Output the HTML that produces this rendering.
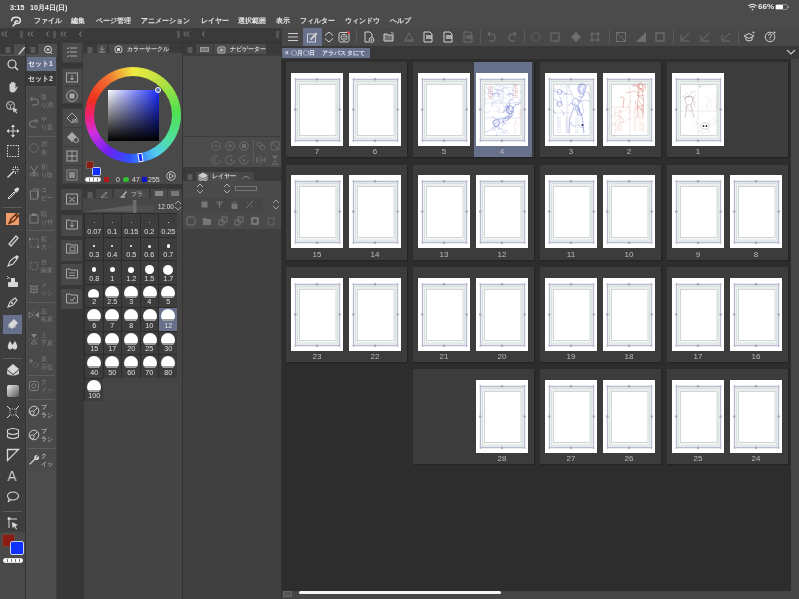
<!DOCTYPE html><html lang="ja"><head><meta charset="utf-8"><style>
*{margin:0;padding:0;box-sizing:border-box}
html,body{width:799px;height:599px;overflow:hidden;background:#4b4b4b;font-family:"Liberation Sans",sans-serif}
.t{position:absolute;white-space:nowrap;line-height:1;will-change:transform}
svg{position:absolute;overflow:visible}
</style></head><body>
<div class="t" style="left:9.5px;top:3.5px;font-size:7.5px;color:#f0f0f0;font-weight:bold;letter-spacing:-0.2px">3:15</div>
<div class="t" style="left:30px;top:3.5px;font-size:7.3px;color:#f0f0f0;font-weight:bold;letter-spacing:-0.1px">10月4日(日)</div>
<svg style="left:748px;top:3px" width="9" height="8" viewBox="0 0 9 8"><path d="M0.5 3 Q4.5 -0.5 8.5 3" stroke="#eee" stroke-width="1.2" fill="none"/><path d="M2 4.6 Q4.5 2.4 7 4.6" stroke="#eee" stroke-width="1.2" fill="none"/><path d="M3.4 6.2 Q4.5 5.3 5.6 6.2 L4.5 7.5Z" fill="#eee"/></svg>
<div class="t" style="left:758px;top:3px;font-size:8px;color:#eee;font-weight:bold">66%</div>
<div style="position:absolute;left:775px;top:4px;width:13px;height:6px;border:1px solid #888;border-radius:2px"></div>
<div style="position:absolute;left:776px;top:5px;width:7px;height:4px;background:#fff;"></div>
<div style="position:absolute;left:788px;top:6px;width:1px;height:2px;background:#888;"></div>
<svg style="left:10px;top:16px" width="12" height="11" viewBox="0 0 12 11"><path d="M1.6 4.8 Q1.8 1.2 6 1.2 Q10.4 1.2 10.4 4.4 Q10.4 7.4 6.6 7.6 Q4.6 7.6 4.9 6.2 Q5.3 4.8 7.6 5.2 M5.6 7.6 Q3.8 8.6 3.2 10" stroke="#e8e8e8" stroke-width="1.5" fill="none" stroke-linecap="round"/></svg>
<div class="t" style="left:34px;top:17px;font-size:7px;color:#e6e6e6;font-weight:bold">ファイル</div>
<div class="t" style="left:71px;top:17px;font-size:7px;color:#e6e6e6;font-weight:bold">編集</div>
<div class="t" style="left:95.5px;top:17px;font-size:7px;color:#e6e6e6;font-weight:bold">ページ管理</div>
<div class="t" style="left:141px;top:17px;font-size:7px;color:#e6e6e6;font-weight:bold">アニメーション</div>
<div class="t" style="left:200.5px;top:17px;font-size:7px;color:#e6e6e6;font-weight:bold">レイヤー</div>
<div class="t" style="left:238px;top:17px;font-size:7px;color:#e6e6e6;font-weight:bold">選択範囲</div>
<div class="t" style="left:276px;top:17px;font-size:7px;color:#e6e6e6;font-weight:bold">表示</div>
<div class="t" style="left:300px;top:17px;font-size:7px;color:#e6e6e6;font-weight:bold">フィルター</div>
<div class="t" style="left:345px;top:17px;font-size:7px;color:#e6e6e6;font-weight:bold">ウィンドウ</div>
<div class="t" style="left:390px;top:17px;font-size:7px;color:#e6e6e6;font-weight:bold">ヘルプ</div>
<div style="position:absolute;left:0px;top:28px;width:799px;height:13px;background:#3a3a3a;"></div>
<div style="position:absolute;left:0px;top:41px;width:25px;height:558px;background:#3e3e3e;"></div>
<div style="position:absolute;left:0px;top:532px;width:25px;height:67px;background:#494949;"></div>
<div style="position:absolute;left:25px;top:41px;width:1px;height:558px;background:#333;"></div>
<div style="position:absolute;left:26px;top:41px;width:31px;height:558px;background:#4d4d4d;"></div>
<div style="position:absolute;left:83px;top:41px;width:99px;height:558px;background:#454545;"></div>
<div style="position:absolute;left:182px;top:41px;width:1px;height:558px;background:#333;"></div>
<div style="position:absolute;left:183px;top:41px;width:98px;height:558px;background:#404040;"></div>
<div style="position:absolute;left:281px;top:41px;width:1px;height:558px;background:#333;"></div>
<div style="position:absolute;left:282px;top:28px;width:517px;height:18px;background:#484848;"></div>
<div style="position:absolute;left:282px;top:46px;width:517px;height:13px;background:#383838;"></div>
<div style="position:absolute;left:282px;top:59px;width:517px;height:540px;background:#2d2d2d;"></div>
<div style="position:absolute;left:791px;top:59px;width:8px;height:540px;background:#454545;"></div>
<div style="position:absolute;left:282px;top:591px;width:517px;height:8px;background:#454545;"></div>
<div style="position:absolute;left:298.5px;top:591.2px;width:202px;height:3px;border-radius:1.5px;background:#f4f4f4"></div>
<div style="position:absolute;left:283px;top:591px;width:9px;height:6px;background:#555;border:1px solid #666"></div>
<svg style="left:1px;top:31px" width="7" height="6" viewBox="0 0 7 6"><path d="M3 0.5 L0.8 3 L3 5.5 M6 0.5 L3.8 3 L6 5.5" stroke="#8c8c8c" stroke-width="0.9" fill="none"/></svg>
<svg style="left:26.5px;top:31px" width="7" height="6" viewBox="0 0 7 6"><path d="M3 0.5 L0.8 3 L3 5.5 M6 0.5 L3.8 3 L6 5.5" stroke="#8c8c8c" stroke-width="0.9" fill="none"/></svg>
<svg style="left:59.5px;top:31px" width="7" height="6" viewBox="0 0 7 6"><path d="M3 0.5 L0.8 3 L3 5.5 M6 0.5 L3.8 3 L6 5.5" stroke="#8c8c8c" stroke-width="0.9" fill="none"/></svg>
<svg style="left:183px;top:31px" width="7" height="6" viewBox="0 0 7 6"><path d="M3 0.5 L0.8 3 L3 5.5 M6 0.5 L3.8 3 L6 5.5" stroke="#8c8c8c" stroke-width="0.9" fill="none"/></svg>
<svg style="left:46px;top:31px" width="4" height="6" viewBox="0 0 4 6"><path d="M2.5 0.5 L0.5 3 L2.5 5.5" stroke="#8c8c8c" stroke-width="0.9" fill="none"/></svg>
<svg style="left:79px;top:31px" width="4" height="6" viewBox="0 0 4 6"><path d="M2.5 0.5 L0.5 3 L2.5 5.5" stroke="#8c8c8c" stroke-width="0.9" fill="none"/></svg>
<svg style="left:202px;top:31px" width="4" height="6" viewBox="0 0 4 6"><path d="M2.5 0.5 L0.5 3 L2.5 5.5" stroke="#8c8c8c" stroke-width="0.9" fill="none"/></svg>
<div style="position:absolute;left:20px;top:30.5px;width:3px;height:7.5px;background:#555;"></div>
<div style="position:absolute;left:53px;top:30.5px;width:3px;height:7.5px;background:#555;"></div>
<div style="position:absolute;left:177px;top:30.5px;width:3px;height:7.5px;background:#555;"></div>
<div style="position:absolute;left:276px;top:30.5px;width:3px;height:7.5px;background:#555;"></div>
<div style="position:absolute;left:0px;top:41px;width:25px;height:13px;background:#3a3a3a;"></div>
<div style="position:absolute;left:14px;top:44px;width:11px;height:10px;background:#4e4e4e;"></div>
<svg style="left:5.0px;top:46.5px" width="6" height="6" viewBox="0 0 6 6"><path d="M0.5 1H5.5M0.5 3H5.5M0.5 5H5.5" stroke="#7a7a7a" stroke-width="1"/></svg>
<div style="position:absolute;left:0px;top:54px;width:25px;height:2px;background:#505050;"></div>
<svg style="left:15.5px;top:45px" width="10" height="10" viewBox="0 0 10 10"><path d="M2 9.5 L7.5 2.5 Q8.5 1.5 9.5 2.5 L3.5 9.5 Z" fill="#d8d8d8"/></svg>
<svg style="left:6px;top:58px" width="14" height="14" viewBox="0 0 14 14"><circle cx="6" cy="6" r="4" stroke="#d8d8d8" stroke-width="1.2" fill="none"/><path d="M9 9 L12 12" stroke="#d8d8d8" stroke-width="1.5"/></svg>
<svg style="left:5.5px;top:80px" width="14" height="14" viewBox="0 0 14 14"><path d="M3.5 8 V4.5 Q3.5 3.5 4.3 3.5 Q5 3.5 5 4.5 V7 V2.8 Q5 2 5.8 2 Q6.5 2 6.5 2.8 V7 V2.5 Q6.5 1.7 7.3 1.7 Q8 1.7 8 2.5 V7 V3.5 Q8 2.7 8.8 2.7 Q9.5 2.7 9.5 3.5 V8.5 L10.5 7 Q11.3 6.2 12 6.8 L10 10.5 Q9 12.5 6.5 12.5 Q3.5 12.5 3.5 9.5Z" fill="#d0d0d0"/></svg>
<svg style="left:5px;top:100px" width="14" height="14" viewBox="0 0 14 14"><circle cx="5.5" cy="5.5" r="4" stroke="#c8c8c8" stroke-width="1" fill="none"/><path d="M3 3.5 L5.5 5.5 L8 3.5 M5.5 5.5 V9" stroke="#c8c8c8" stroke-width="0.8" fill="none"/><path d="M8 7.5 L13 10 L10.8 10.6 L12.2 13 L11.2 13.6 L9.8 11.2 L8.3 12.6Z" fill="#d0d0d0"/></svg>
<svg style="left:5.5px;top:124px" width="14" height="14" viewBox="0 0 14 14"><path d="M7 1 V13 M1 7 H13" stroke="#d8d8d8" stroke-width="0.9"/><path d="M7 0.5 L5 3 H9Z M7 13.5 L5 11 H9Z M0.5 7 L3 5 V9Z M13.5 7 L11 5 V9Z" fill="#d8d8d8"/></svg>
<svg style="left:6px;top:144px" width="14" height="14" viewBox="0 0 14 14"><rect x="1.5" y="1.5" width="11" height="11" stroke="#d8d8d8" stroke-width="1.1" stroke-dasharray="1.5 1.2" fill="none"/></svg>
<svg style="left:6px;top:165px" width="14" height="14" viewBox="0 0 14 14"><path d="M1.5 12.5 L8 6" stroke="#d8d8d8" stroke-width="1.4"/><path d="M9.5 1 V3.5 M9.5 6.5 V9 M6 4.5 H8.5 M10.5 4.5 H13 M7 2 L8 3 M12 2 L11 3 M7 7 L8 6 M12 7 L11 6" stroke="#d8d8d8" stroke-width="0.9"/></svg>
<svg style="left:6px;top:186px" width="14" height="14" viewBox="0 0 14 14"><path d="M2 12 L8 6 L9 7 L3 13Z" stroke="#d8d8d8" stroke-width="1" fill="none"/><path d="M8 4 L10 2 Q12 1 13 2.5 Q13.5 4 12 5 L10 7Z" fill="#d8d8d8"/></svg>
<div style="position:absolute;left:3px;top:207px;width:19px;height:1px;background:#5a5a5a;"></div>
<div style="position:absolute;left:6.3px;top:212.7px;width:12.7px;height:12.5px;background:#ee9c6c;"></div>
<svg style="left:6px;top:212px" width="14" height="14" viewBox="0 0 14 14"><path d="M3 11.5 L5 7 L9.5 3 L11.5 5 L7.5 9.5Z" stroke="#5a2a10" stroke-width="1.3" fill="none"/><path d="M3 11.5 L6.5 8" stroke="#5a2a10" stroke-width="1"/><path d="M9 2.5 L10.5 1.5 L12.5 3.5 L11.5 5" stroke="#5a2a10" stroke-width="1.3" fill="none"/></svg>
<svg style="left:6px;top:233px" width="14" height="14" viewBox="0 0 14 14"><path d="M3 11 L10 3 L12 5 L5 13Z" stroke="#d8d8d8" stroke-width="1.2" fill="none"/></svg>
<svg style="left:6px;top:254px" width="14" height="14" viewBox="0 0 14 14"><path d="M2 12 L4 7 L9 3 L11 5 L7 10Z" stroke="#d8d8d8" stroke-width="1.1" fill="none"/><path d="M9 3 L11 1 L13 3 L11 5" fill="#d8d8d8"/></svg>
<svg style="left:6px;top:274px" width="14" height="14" viewBox="0 0 14 14"><rect x="2" y="8" width="10" height="5" rx="1" fill="#d8d8d8"/><rect x="5" y="4" width="4" height="5" fill="#d8d8d8"/><path d="M1 2 L4 5 M1 5 L3 3" stroke="#d8d8d8" stroke-width="0.8"/></svg>
<svg style="left:6px;top:295px" width="14" height="14" viewBox="0 0 14 14"><path d="M2 12 L4 7 L9 3 L11 5 L7 10Z" stroke="#d8d8d8" stroke-width="1.1" fill="none"/><circle cx="6" cy="8" r="1" fill="#d8d8d8"/></svg>
<div style="position:absolute;left:3px;top:314.5px;width:19px;height:19.5px;background:#68718c;"></div>
<svg style="left:6px;top:317px" width="14" height="14" viewBox="0 0 14 14"><path d="M2 8 L8 2 L12 6 L6 12Z" fill="#d8d8d8"/><path d="M2 10 H10" stroke="#d8d8d8" stroke-width="0.8"/></svg>
<svg style="left:6px;top:338px" width="14" height="14" viewBox="0 0 14 14"><path d="M4 3 Q1 8 2 10 Q4 13 6.5 10 Q9 13 11 10 Q12 8 9 3 L6.5 7Z" fill="#d8d8d8"/></svg>
<div style="position:absolute;left:3px;top:358px;width:19px;height:1px;background:#5a5a5a;"></div>
<svg style="left:6px;top:363px" width="14" height="14" viewBox="0 0 14 14"><path d="M1 6 L7 1 L13 6 L7 11Z" fill="#d8d8d8"/><path d="M1 7 L7 12 L13 7 V11 Q7 14 1 11Z" fill="#d8d8d8" opacity="0.9"/></svg>
<div style="position:absolute;left:7px;top:385px;width:12px;height:12px;border-radius:2px;background:linear-gradient(135deg,#eee,#555)"></div>
<svg style="left:6px;top:405px" width="14" height="14" viewBox="0 0 14 14"><path d="M1 1 L4 4 M13 1 L10 4 M1 13 L4 10 M13 13 L10 10" stroke="#d8d8d8" stroke-width="1"/><rect x="4" y="4" width="6" height="6" stroke="#d8d8d8" stroke-width="0.8" stroke-dasharray="1 1" fill="none"/></svg>
<svg style="left:6px;top:427px" width="14" height="14" viewBox="0 0 14 14"><path d="M1.5 3 Q7 0 12.5 3 V6 Q7 9 1.5 6Z M1.5 7 V10 Q7 13 12.5 10 V7" stroke="#d8d8d8" stroke-width="1.1" fill="none"/></svg>
<svg style="left:6px;top:448px" width="14" height="14" viewBox="0 0 14 14"><path d="M1.5 1.5 H12.5 L1.5 12.5Z" stroke="#d8d8d8" stroke-width="1.3" fill="none"/></svg>
<div class="t" style="left:7px;top:468px;font-size:15px;color:#d0d0d0;font-weight:normal;transform:scaleX(0.9)">A</div>
<svg style="left:6px;top:490px" width="14" height="14" viewBox="0 0 14 14"><ellipse cx="7" cy="6" rx="5.5" ry="4" stroke="#d8d8d8" stroke-width="1.1" fill="none"/><path d="M3 9 L2 12 L5 9.8" stroke="#d8d8d8" stroke-width="1" fill="none"/></svg>
<div style="position:absolute;left:3px;top:511px;width:19px;height:1px;background:#5a5a5a;"></div>
<svg style="left:6px;top:516px" width="14" height="14" viewBox="0 0 14 14"><circle cx="3" cy="2.5" r="1.5" fill="#d8d8d8"/><path d="M3 3 V12 M3 3 H11" stroke="#d8d8d8" stroke-width="1"/><path d="M6 6 L12 9 L9.5 10 L11 13 L10 13.5 L8.5 10.5 L6.5 12Z" fill="#d8d8d8"/></svg>
<div style="position:absolute;left:2px;top:534px;width:13px;height:13px;background:#8c1c10;border:1px solid #6a4a40"></div>
<div style="position:absolute;left:10px;top:541px;width:14px;height:14px;background:#1030ff;border:1.5px solid #c8d0f0;border-radius:2px"></div>
<div style="position:absolute;left:3px;top:558px;width:20px;height:5px;border:1px solid #ddd;border-radius:2px;background:repeating-linear-gradient(90deg,#fff 0 3px,#777 3px 4px)"></div>
<div style="position:absolute;left:26px;top:41px;width:31px;height:13px;background:#3a3a3a;"></div>
<div style="position:absolute;left:38px;top:44px;width:19px;height:10px;background:#4e4e4e;"></div>
<svg style="left:30.0px;top:46.5px" width="6" height="6" viewBox="0 0 6 6"><path d="M0.5 1H5.5M0.5 3H5.5M0.5 5H5.5" stroke="#7a7a7a" stroke-width="1"/></svg>
<svg style="left:43px;top:45px" width="10" height="10" viewBox="0 0 10 10"><circle cx="5" cy="4.5" r="3.5" stroke="#d8d8d8" stroke-width="1" fill="none"/><circle cx="5" cy="4.5" r="1.3" fill="#d8d8d8"/><path d="M7 7 L9 9" stroke="#d8d8d8" stroke-width="1"/></svg>
<div style="position:absolute;left:26px;top:54px;width:31px;height:2px;background:#505050;"></div>
<div style="position:absolute;left:27px;top:57px;width:29px;height:14px;background:#68718c;"></div>
<div class="t" style="left:28px;top:60px;font-size:7px;color:#e6e6f0;font-weight:bold">セット1</div>
<div style="position:absolute;left:26px;top:71px;width:31px;height:15px;background:#3a3a3a;"></div>
<div class="t" style="left:28px;top:75px;font-size:7px;color:#e0e0e0;font-weight:bold">セット2</div>
<div style="position:absolute;left:27px;top:88px;width:28.5px;height:383px;background:#4a4a4a;"></div>
<div style="position:absolute;left:55.5px;top:56px;width:1.5px;height:543px;background:#414141;"></div>
<div class="t" style="left:41px;top:94px;font-size:6px;color:#858585;">取</div>
<div class="t" style="left:41px;top:102px;font-size:6px;color:#858585;">り消</div>
<svg style="left:28px;top:95px" width="12" height="12" viewBox="0 0 12 12"><path d="M3 4 H7.5 Q10.5 4 10.5 7 Q10.5 10 7.5 10 H4" stroke="#858585" stroke-width="1" fill="none"/><path d="M4.5 2 L2.5 4 L4.5 6" stroke="#858585" stroke-width="1" fill="none"/></svg>
<div class="t" style="left:41px;top:115.5px;font-size:6px;color:#858585;">や</div>
<div class="t" style="left:41px;top:123.5px;font-size:6px;color:#858585;">り直</div>
<svg style="left:28px;top:116.5px" width="12" height="12" viewBox="0 0 12 12"><path d="M9 4 H4.5 Q1.5 4 1.5 7 Q1.5 10 4.5 10 H8" stroke="#858585" stroke-width="1" fill="none"/><path d="M7.5 2 L9.5 4 L7.5 6" stroke="#858585" stroke-width="1" fill="none"/></svg>
<div class="t" style="left:41px;top:141px;font-size:6px;color:#858585;">消</div>
<div class="t" style="left:41px;top:149px;font-size:6px;color:#858585;">去</div>
<svg style="left:28px;top:142px" width="12" height="12" viewBox="0 0 12 12"><circle cx="6" cy="6" r="4.3" stroke="#858585" stroke-width="1" fill="none" stroke-dasharray="1.2 1"/></svg>
<div class="t" style="left:41px;top:164px;font-size:6px;color:#858585;">切</div>
<div class="t" style="left:41px;top:172px;font-size:6px;color:#858585;">り取</div>
<svg style="left:28px;top:165px" width="12" height="12" viewBox="0 0 12 12"><path d="M2.5 1 L7 8 M9.5 1 L5 8" stroke="#858585" stroke-width="0.9"/><circle cx="4" cy="9.5" r="1.7" stroke="#858585" stroke-width="0.8" fill="none"/><circle cx="8" cy="9.5" r="1.7" stroke="#858585" stroke-width="0.8" fill="none"/></svg>
<div class="t" style="left:41px;top:187px;font-size:6px;color:#858585;">コ</div>
<div class="t" style="left:41px;top:195px;font-size:6px;color:#858585;">ピー</div>
<svg style="left:28px;top:188px" width="12" height="12" viewBox="0 0 12 12"><rect x="2.5" y="3" width="7" height="8" stroke="#858585" stroke-width="0.9" fill="none"/><path d="M4.5 1 H10.5 V9" stroke="#858585" stroke-width="0.8" fill="none"/></svg>
<div class="t" style="left:41px;top:210.5px;font-size:6px;color:#858585;">貼</div>
<div class="t" style="left:41px;top:218.5px;font-size:6px;color:#858585;">り付</div>
<svg style="left:28px;top:211.5px" width="12" height="12" viewBox="0 0 12 12"><rect x="2" y="3" width="8" height="8" stroke="#858585" stroke-width="0.9" fill="none"/><rect x="4" y="1.5" width="4" height="2.5" fill="#858585"/></svg>
<div class="t" style="left:41px;top:235.5px;font-size:6px;color:#858585;">拡</div>
<div class="t" style="left:41px;top:243.5px;font-size:6px;color:#858585;">大・</div>
<svg style="left:28px;top:236.5px" width="12" height="12" viewBox="0 0 12 12"><rect x="2" y="2" width="8" height="8" stroke="#858585" stroke-width="0.8" fill="none" stroke-dasharray="1 1"/><rect x="1" y="1" width="2" height="2" fill="#858585"/><rect x="9" y="9" width="2" height="2" fill="#858585"/></svg>
<div class="t" style="left:41px;top:259px;font-size:6px;color:#858585;">自</div>
<div class="t" style="left:41px;top:267px;font-size:6px;color:#858585;">由変</div>
<svg style="left:28px;top:260px" width="12" height="12" viewBox="0 0 12 12"><path d="M3 2 L10 3 L9 10 L2 9Z" stroke="#858585" stroke-width="0.8" fill="none" stroke-dasharray="1 1"/></svg>
<div class="t" style="left:41px;top:282px;font-size:6px;color:#858585;">メ</div>
<div class="t" style="left:41px;top:290px;font-size:6px;color:#858585;">ッシ</div>
<svg style="left:28px;top:283px" width="12" height="12" viewBox="0 0 12 12"><path d="M2 3 Q6 4.5 10 3 M2 6 Q6 7.5 10 6 M2 9 Q6 10.5 10 9 M3 2 V10 M6 2.5 V10.5 M9 2 V10" stroke="#858585" stroke-width="0.7" fill="none"/></svg>
<div class="t" style="left:41px;top:308px;font-size:6px;color:#858585;">左</div>
<div class="t" style="left:41px;top:316px;font-size:6px;color:#858585;">右反</div>
<svg style="left:28px;top:309px" width="12" height="12" viewBox="0 0 12 12"><path d="M6 1 V11" stroke="#858585" stroke-width="0.7" stroke-dasharray="1 1"/><path d="M1 3 L5 6 L1 9Z" stroke="#858585" stroke-width="0.8" fill="none"/><path d="M11 3 L7 6 L11 9Z" fill="#858585"/></svg>
<div class="t" style="left:41px;top:331.5px;font-size:6px;color:#858585;">上</div>
<div class="t" style="left:41px;top:339.5px;font-size:6px;color:#858585;">下反</div>
<svg style="left:28px;top:332.5px" width="12" height="12" viewBox="0 0 12 12"><path d="M1 6 H11" stroke="#858585" stroke-width="0.7" stroke-dasharray="1 1"/><path d="M3 1 L6 5 L9 1Z" fill="#858585"/><path d="M3 11 L6 7 L9 11Z" stroke="#858585" stroke-width="0.8" fill="none"/></svg>
<div class="t" style="left:41px;top:355.5px;font-size:6px;color:#858585;">表</div>
<div class="t" style="left:41px;top:363.5px;font-size:6px;color:#858585;">示位</div>
<svg style="left:28px;top:356.5px" width="12" height="12" viewBox="0 0 12 12"><path d="M1 4 H5 M3 2 V6" stroke="#858585" stroke-width="0.8"/><circle cx="7.5" cy="8" r="2.5" stroke="#858585" stroke-width="0.8" fill="none" stroke-dasharray="1 0.8"/></svg>
<div class="t" style="left:41px;top:379px;font-size:6px;color:#858585;">ク</div>
<div class="t" style="left:41px;top:387px;font-size:6px;color:#858585;">イッ</div>
<svg style="left:28px;top:380px" width="12" height="12" viewBox="0 0 12 12"><rect x="1.5" y="1.5" width="9" height="9" rx="2" stroke="#858585" stroke-width="0.9" fill="none"/><circle cx="6" cy="6" r="2.3" stroke="#858585" stroke-width="0.9" fill="none"/></svg>
<div class="t" style="left:41px;top:403.5px;font-size:6px;color:#d6d6d6;">ブ</div>
<div class="t" style="left:41px;top:411.5px;font-size:6px;color:#d6d6d6;">ラシ</div>
<svg style="left:28px;top:404.5px" width="12" height="12" viewBox="0 0 12 12"><circle cx="6" cy="6" r="4.8" stroke="#d6d6d6" stroke-width="0.9" fill="none"/><circle cx="4.2" cy="7.8" r="2" stroke="#d6d6d6" stroke-width="0.8" fill="none"/><path d="M5.5 6.5 L9 3" stroke="#d6d6d6" stroke-width="0.9"/></svg>
<div class="t" style="left:41px;top:428px;font-size:6px;color:#d6d6d6;">ブ</div>
<div class="t" style="left:41px;top:436px;font-size:6px;color:#d6d6d6;">ラシ</div>
<svg style="left:28px;top:429px" width="12" height="12" viewBox="0 0 12 12"><circle cx="6" cy="6" r="4.8" stroke="#d6d6d6" stroke-width="0.9" fill="none"/><circle cx="4.2" cy="7.8" r="2" stroke="#d6d6d6" stroke-width="0.8" fill="none"/><path d="M5.5 6.5 L9 3" stroke="#d6d6d6" stroke-width="0.9"/></svg>
<div class="t" style="left:41px;top:453px;font-size:6px;color:#d6d6d6;">ク</div>
<div class="t" style="left:41px;top:461px;font-size:6px;color:#d6d6d6;">イッ</div>
<svg style="left:28px;top:454px" width="12" height="12" viewBox="0 0 12 12"><path d="M2 10 L7 5 M7 5 Q6 2 8.5 1.5 L7.5 3.5 L9 4.5 L10.5 3 Q11 6 7.5 5.5" stroke="#d6d6d6" stroke-width="1.1" fill="none" stroke-linecap="round"/></svg>
<div style="position:absolute;left:28px;top:135.5px;width:27px;height:1px;background:#5c5c5c;"></div>
<div style="position:absolute;left:28px;top:230px;width:27px;height:1px;background:#5c5c5c;"></div>
<div style="position:absolute;left:28px;top:302px;width:27px;height:1px;background:#5c5c5c;"></div>
<div style="position:absolute;left:28px;top:375px;width:27px;height:1px;background:#5c5c5c;"></div>
<div style="position:absolute;left:28px;top:398.5px;width:27px;height:1px;background:#5c5c5c;"></div>
<div style="position:absolute;left:28px;top:447.5px;width:27px;height:1px;background:#5c5c5c;"></div>
<div style="position:absolute;left:57px;top:41px;width:26px;height:558px;background:#373737;"></div>
<div style="position:absolute;left:61px;top:42px;width:22px;height:21px;background:#3d3d3d;"></div>
<div style="position:absolute;left:63px;top:43px;width:19px;height:19px;background:#4a4a4a;"></div>
<div style="position:absolute;left:61px;top:68px;width:22px;height:36px;background:#3d3d3d;"></div>
<div style="position:absolute;left:63px;top:69px;width:19px;height:17px;background:#4a4a4a;"></div>
<div style="position:absolute;left:63px;top:87px;width:19px;height:16px;background:#4a4a4a;"></div>
<div style="position:absolute;left:61px;top:108px;width:22px;height:76px;background:#3d3d3d;"></div>
<div style="position:absolute;left:63px;top:109px;width:19px;height:18px;background:#4a4a4a;"></div>
<div style="position:absolute;left:63px;top:128px;width:19px;height:18px;background:#4a4a4a;"></div>
<div style="position:absolute;left:63px;top:147px;width:19px;height:18px;background:#4a4a4a;"></div>
<div style="position:absolute;left:63px;top:166px;width:19px;height:17px;background:#4a4a4a;"></div>
<div style="position:absolute;left:60.5px;top:189.3px;width:21.7px;height:21px;background:#484848;"></div>
<div style="position:absolute;left:60.5px;top:214.6px;width:21.7px;height:21.4px;background:#484848;"></div>
<div style="position:absolute;left:60.5px;top:239.6px;width:21.7px;height:21px;background:#484848;"></div>
<div style="position:absolute;left:60.5px;top:264px;width:21.7px;height:21px;background:#484848;"></div>
<div style="position:absolute;left:60.5px;top:288.6px;width:21.7px;height:20px;background:#484848;"></div>
<svg style="left:65px;top:45px" width="14" height="14" viewBox="0 0 14 14"><path d="M5 3 H12 M5 7 H12 M5 11 H12" stroke="#a8a8a8" stroke-width="1.2"/><path d="M2 3 L3 4 L4 2 M2 7 L3 8 L4 6 M2 11 L3 12 L4 10" stroke="#a8a8a8" stroke-width="0.8" fill="none"/></svg>
<svg style="left:65px;top:70px" width="14" height="14" viewBox="0 0 14 14"><rect x="1.5" y="3" width="11" height="9" stroke="#a8a8a8" stroke-width="1" fill="none"/><path d="M7 5 V10 M5 8 L7 10 L9 8" stroke="#a8a8a8" stroke-width="1" fill="none"/></svg>
<svg style="left:65px;top:89px" width="14" height="14" viewBox="0 0 14 14"><circle cx="7" cy="7" r="5.5" stroke="#a8a8a8" stroke-width="1" fill="none"/><rect x="4.5" y="4.5" width="5" height="5" fill="#a8a8a8"/></svg>
<svg style="left:65px;top:111px" width="14" height="14" viewBox="0 0 14 14"><path d="M2 7 L7 2 L12 7 L7 12Z" stroke="#a8a8a8" stroke-width="1" fill="none"/><path d="M7 9 H13 M7 11 H13" stroke="#a8a8a8" stroke-width="1"/></svg>
<svg style="left:65px;top:130px" width="14" height="14" viewBox="0 0 14 14"><path d="M2 7 L7 2 L12 7 L7 12Z" fill="#a8a8a8"/><circle cx="11" cy="10" r="2.5" stroke="#a8a8a8" stroke-width="1" fill="#4a4a4a"/></svg>
<svg style="left:65px;top:149px" width="14" height="14" viewBox="0 0 14 14"><rect x="2" y="2" width="10" height="10" stroke="#a8a8a8" stroke-width="1" fill="none"/><path d="M2 7 H12 M7 2 V12" stroke="#a8a8a8" stroke-width="1"/></svg>
<svg style="left:65px;top:168px" width="14" height="14" viewBox="0 0 14 14"><rect x="2" y="2" width="10" height="10" stroke="#8a8a8a" stroke-width="1" fill="none"/><rect x="4" y="4" width="6" height="6" fill="#8a8a8a"/></svg>
<svg style="left:65px;top:192px" width="14" height="14" viewBox="0 0 14 14"><rect x="1.5" y="2" width="11" height="10" stroke="#a8a8a8" stroke-width="1" fill="none"/><path d="M4 5 L10 10 M10 5 L4 10" stroke="#a8a8a8" stroke-width="1"/></svg>
<svg style="left:65px;top:217px" width="14" height="14" viewBox="0 0 14 14"><path d="M1.5 3 H5 L6 4 H12.5 V12 H1.5Z" stroke="#a8a8a8" stroke-width="1" fill="none"/><path d="M7 5.5 V10 M5 8 L7 10 L9 8" stroke="#a8a8a8" stroke-width="1" fill="none"/></svg>
<svg style="left:65px;top:241px" width="14" height="14" viewBox="0 0 14 14"><path d="M1.5 3 H5 L6 4 H12.5 V12 H1.5Z" stroke="#a8a8a8" stroke-width="1" fill="none"/><rect x="5" y="6" width="5" height="4" stroke="#a8a8a8" stroke-width="0.8" fill="none"/></svg>
<svg style="left:65px;top:266px" width="14" height="14" viewBox="0 0 14 14"><path d="M1.5 3 H5 L6 4 H12.5 V12 H1.5Z" stroke="#a8a8a8" stroke-width="1" fill="none"/><path d="M4 7 H10 M4 9.5 H10" stroke="#a8a8a8" stroke-width="0.8"/></svg>
<svg style="left:65px;top:291px" width="14" height="14" viewBox="0 0 14 14"><path d="M1.5 3 H5 L6 4 H12.5 V12 H1.5Z" stroke="#a8a8a8" stroke-width="1" fill="none"/><path d="M5 8 L7 10 L10 6" stroke="#a8a8a8" stroke-width="1" fill="none"/></svg>
<div style="position:absolute;left:83px;top:41px;width:99px;height:3px;background:#373737;"></div>
<div style="position:absolute;left:83px;top:44px;width:99px;height:9px;background:#3a3a3a;"></div>
<svg style="left:87.0px;top:46.5px" width="6" height="6" viewBox="0 0 6 6"><path d="M0.5 1H5.5M0.5 3H5.5M0.5 5H5.5" stroke="#7a7a7a" stroke-width="1"/></svg>
<div style="position:absolute;left:97px;top:44px;width:10px;height:9px;background:#4a4a4a;"></div>
<svg style="left:98px;top:45px" width="8" height="8" viewBox="0 0 8 8"><path d="M4 1 V5 M2 3.5 L4 5.5 L6 3.5 M1 7 H7" stroke="#aaa" stroke-width="0.8" fill="none"/></svg>
<div style="position:absolute;left:109px;top:44px;width:60px;height:9px;background:#4a4a4a;"></div>
<svg style="left:114px;top:44.8px" width="9" height="9" viewBox="0 0 9 9"><circle cx="4.5" cy="4.5" r="3.6" stroke="#ddd" stroke-width="0.9" fill="none"/><rect x="3" y="3" width="3" height="3" rx="0.6" fill="#ddd"/></svg>
<div class="t" style="left:127px;top:47.2px;font-size:5.6px;color:#d4d4d4;font-weight:bold">カラーサークル</div>
<div style="position:absolute;left:83px;top:53px;width:99px;height:131px;background:#494949;"></div>
<div style="position:absolute;left:85px;top:67px;width:96px;height:96px;border-radius:50%;background:conic-gradient(from 0deg,#f0e840 0deg,#b8e040 40deg,#50e050 85deg,#50e0a0 125deg,#50c8f0 150deg,#3050ff 185deg,#7020f0 215deg,#d030e0 245deg,#f02070 270deg,#f03020 290deg,#f07030 325deg,#f0e840 360deg)"></div>
<div style="position:absolute;left:94px;top:76px;width:78px;height:78px;border-radius:50%;background:#494949"></div>
<div style="position:absolute;left:108px;top:90px;width:51px;height:51px;background:linear-gradient(to bottom,rgba(0,0,0,0),#000),linear-gradient(to right,#fff,#1a2cff)"></div>
<div style="position:absolute;left:155px;top:86.5px;width:6px;height:6px;border-radius:50%;border:1.2px solid #fff;background:#6070b0"></div>
<div style="position:absolute;left:138px;top:153px;width:5px;height:9px;border:1.2px solid #fff;background:#1030ff;transform:rotate(-10deg)"></div>
<div style="position:absolute;left:86px;top:161px;width:8px;height:8px;background:#8c1c10;border:1px solid #7a5a50"></div>
<div style="position:absolute;left:91.5px;top:166.5px;width:9.5px;height:9px;background:#1030ff;border:1px solid #c0c8f0;border-radius:1.5px"></div>
<div style="position:absolute;left:85px;top:177px;width:16px;height:5px;border:1px solid #ccc;border-radius:2px;background:repeating-linear-gradient(90deg,#fff 0 3px,#888 3px 4px)"></div>
<div style="position:absolute;left:104px;top:176.5px;width:5px;height:5px;background:#b01818;"></div>
<div class="t" style="left:115.5px;top:175.5px;font-size:7px;color:#ddd;">0</div>
<div style="position:absolute;left:123px;top:176.5px;width:5.5px;height:5.5px;border-radius:50%;background:#30c030"></div>
<div class="t" style="left:131.5px;top:175.5px;font-size:7px;color:#ddd;">47</div>
<div style="position:absolute;left:142px;top:176.5px;width:5px;height:5px;background:#1010d0;"></div>
<div class="t" style="left:147.5px;top:175.5px;font-size:7px;color:#ddd;">255</div>
<svg style="left:166px;top:171px" width="10" height="10" viewBox="0 0 10 10"><circle cx="5" cy="5" r="4.3" stroke="#ccc" stroke-width="0.9" fill="none"/><path d="M3.5 2.5 V7.5 L7.5 5Z" stroke="#ccc" stroke-width="0.8" fill="none"/></svg>
<div style="position:absolute;left:83px;top:184px;width:99px;height:5px;background:#373737;"></div>
<div style="position:absolute;left:83px;top:189px;width:99px;height:9px;background:#3a3a3a;"></div>
<svg style="left:87.0px;top:191.5px" width="6" height="6" viewBox="0 0 6 6"><path d="M0.5 1H5.5M0.5 3H5.5M0.5 5H5.5" stroke="#7a7a7a" stroke-width="1"/></svg>
<div style="position:absolute;left:96px;top:189px;width:16px;height:9px;background:#484848;"></div>
<svg style="left:100px;top:190px" width="8" height="8" viewBox="0 0 8 8"><path d="M1 7 L6 2 L7 3 L2 8Z M3 8 H8" stroke="#999" stroke-width="0.8" fill="none"/></svg>
<div style="position:absolute;left:114px;top:189px;width:35px;height:9px;background:#4a4a4a;"></div>
<svg style="left:119px;top:189.5px" width="9" height="9" viewBox="0 0 9 9"><path d="M1 8 L7 1 L8 2 L2 9Z" fill="#bbb"/><circle cx="4" cy="7" r="2" fill="#999"/></svg>
<div class="t" style="left:131px;top:190.5px;font-size:6px;color:#bbb;">ブラ</div>
<div style="position:absolute;left:151px;top:189px;width:16px;height:9px;background:#484848;"></div>
<div style="position:absolute;left:155px;top:191px;width:8px;height:5px;background:#888;"></div>
<div style="position:absolute;left:168px;top:189px;width:13px;height:9px;background:#484848;"></div>
<div style="position:absolute;left:171px;top:191px;width:8px;height:5px;background:#777;"></div>
<div style="position:absolute;left:83px;top:198px;width:99px;height:15px;background:#474747;"></div>
<svg style="left:85px;top:199px" width="90" height="14"><path d="M0 12.5 L49 6 L49 12.5Z" fill="#5f5f5f"/><path d="M49 6.5 L68 6 L68 12.5 L49 12.5Z" fill="#4f4f4f"/><rect x="48" y="1" width="3.5" height="13" fill="#6c6c6c"/></svg>
<div class="t" style="left:157.5px;top:203.5px;font-size:6.3px;color:#ddd;">12.00</div>
<svg style="left:174px;top:199px" width="8" height="13" viewBox="0 0 8 13"><path d="M1 5 L4 2 L7 5 M1 8 L4 11 L7 8" stroke="#aaa" stroke-width="0.9" fill="none"/></svg>
<div style="position:absolute;left:83px;top:213px;width:99px;height:386px;background:#444444;"></div>
<div style="position:absolute;left:83px;top:213px;width:1px;height:386px;background:#363636;"></div>
<div style="position:absolute;left:84px;top:213px;width:93px;height:188px;background:#2c2c2c;"></div>
<div style="position:absolute;left:85.0px;top:214.0px;width:17.6px;height:22.5px;background:#3d3d3d;"></div>
<div style="position:absolute;left:93.6px;top:222.3px;width:0.4px;height:0.4px;background:#999"></div>
<div class="t" style="left:84.5px;top:227.6px;width:18.6px;text-align:center;font-size:7.2px;color:#e0e0e0">0.07</div>
<div style="position:absolute;left:103.6px;top:214.0px;width:17.6px;height:22.5px;background:#3d3d3d;"></div>
<div style="position:absolute;left:112.1px;top:222.2px;width:0.5px;height:0.5px;background:#999"></div>
<div class="t" style="left:103.1px;top:227.6px;width:18.6px;text-align:center;font-size:7.2px;color:#e0e0e0">0.1</div>
<div style="position:absolute;left:122.2px;top:214.0px;width:17.6px;height:22.5px;background:#3d3d3d;"></div>
<div style="position:absolute;left:130.7px;top:222.2px;width:0.6px;height:0.6px;background:#999"></div>
<div class="t" style="left:121.7px;top:227.6px;width:18.6px;text-align:center;font-size:7.2px;color:#e0e0e0">0.15</div>
<div style="position:absolute;left:140.8px;top:214.0px;width:17.6px;height:22.5px;background:#3d3d3d;"></div>
<div style="position:absolute;left:149.2px;top:222.1px;width:0.8px;height:0.8px;background:#999"></div>
<div class="t" style="left:140.3px;top:227.6px;width:18.6px;text-align:center;font-size:7.2px;color:#e0e0e0">0.2</div>
<div style="position:absolute;left:159.4px;top:214.0px;width:17.6px;height:22.5px;background:#3d3d3d;"></div>
<div style="position:absolute;left:167.7px;top:222.0px;width:1px;height:1px;border-radius:50%;background:#fff"></div>
<div class="t" style="left:158.9px;top:227.6px;width:18.6px;text-align:center;font-size:7.2px;color:#e0e0e0">0.25</div>
<div style="position:absolute;left:85.0px;top:237.5px;width:17.6px;height:22.5px;background:#3d3d3d;"></div>
<div style="position:absolute;left:93.0px;top:245.2px;width:1.5px;height:1.5px;border-radius:50%;background:#fff"></div>
<div class="t" style="left:84.5px;top:251.1px;width:18.6px;text-align:center;font-size:7.2px;color:#e0e0e0">0.3</div>
<div style="position:absolute;left:103.6px;top:237.5px;width:17.6px;height:22.5px;background:#3d3d3d;"></div>
<div style="position:absolute;left:111.4px;top:245.0px;width:2px;height:2px;border-radius:50%;background:#fff"></div>
<div class="t" style="left:103.1px;top:251.1px;width:18.6px;text-align:center;font-size:7.2px;color:#e0e0e0">0.4</div>
<div style="position:absolute;left:122.2px;top:237.5px;width:17.6px;height:22.5px;background:#3d3d3d;"></div>
<div style="position:absolute;left:129.8px;top:244.8px;width:2.5px;height:2.5px;border-radius:50%;background:#fff"></div>
<div class="t" style="left:121.7px;top:251.1px;width:18.6px;text-align:center;font-size:7.2px;color:#e0e0e0">0.5</div>
<div style="position:absolute;left:140.8px;top:237.5px;width:17.6px;height:22.5px;background:#3d3d3d;"></div>
<div style="position:absolute;left:148.1px;top:244.5px;width:3px;height:3px;border-radius:50%;background:#fff"></div>
<div class="t" style="left:140.3px;top:251.1px;width:18.6px;text-align:center;font-size:7.2px;color:#e0e0e0">0.6</div>
<div style="position:absolute;left:159.4px;top:237.5px;width:17.6px;height:22.5px;background:#3d3d3d;"></div>
<div style="position:absolute;left:166.5px;top:244.2px;width:3.5px;height:3.5px;border-radius:50%;background:#fff"></div>
<div class="t" style="left:158.9px;top:251.1px;width:18.6px;text-align:center;font-size:7.2px;color:#e0e0e0">0.7</div>
<div style="position:absolute;left:85.0px;top:261.0px;width:17.6px;height:22.5px;background:#3d3d3d;"></div>
<div style="position:absolute;left:91.7px;top:267.4px;width:4.2px;height:4.2px;border-radius:50%;background:#fff"></div>
<div class="t" style="left:84.5px;top:274.6px;width:18.6px;text-align:center;font-size:7.2px;color:#e0e0e0">0.8</div>
<div style="position:absolute;left:103.6px;top:261.0px;width:17.6px;height:22.5px;background:#3d3d3d;"></div>
<div style="position:absolute;left:109.9px;top:267.0px;width:5px;height:5px;border-radius:50%;background:#fff"></div>
<div class="t" style="left:103.1px;top:274.6px;width:18.6px;text-align:center;font-size:7.2px;color:#e0e0e0">1</div>
<div style="position:absolute;left:122.2px;top:261.0px;width:17.6px;height:22.5px;background:#3d3d3d;"></div>
<div style="position:absolute;left:128.0px;top:266.5px;width:6px;height:6px;border-radius:50%;background:#fff"></div>
<div class="t" style="left:121.7px;top:274.6px;width:18.6px;text-align:center;font-size:7.2px;color:#e0e0e0">1.2</div>
<div style="position:absolute;left:140.8px;top:261.0px;width:17.6px;height:22.5px;background:#3d3d3d;"></div>
<div style="position:absolute;left:145.4px;top:265.2px;width:8.5px;height:8.5px;border-radius:50%;background:#fff"></div>
<div class="t" style="left:140.3px;top:274.6px;width:18.6px;text-align:center;font-size:7.2px;color:#e0e0e0">1.5</div>
<div style="position:absolute;left:159.4px;top:261.0px;width:17.6px;height:22.5px;background:#3d3d3d;"></div>
<div style="position:absolute;left:163.2px;top:264.5px;width:10px;height:10px;border-radius:50%;background:#fff"></div>
<div class="t" style="left:158.9px;top:274.6px;width:18.6px;text-align:center;font-size:7.2px;color:#e0e0e0">1.7</div>
<div style="position:absolute;left:85.0px;top:284.5px;width:17.6px;height:22.5px;background:#3d3d3d;"></div>
<div style="position:absolute;left:88.3px;top:288.5px;width:11px;height:9.6px;overflow:hidden"><div style="width:11px;height:11px;border-radius:50%;background:linear-gradient(to bottom,#fff 0 71%,#a0a0a0 71%)"></div></div>
<div class="t" style="left:84.5px;top:298.1px;width:18.6px;text-align:center;font-size:7.2px;color:#e0e0e0">2</div>
<div style="position:absolute;left:103.6px;top:284.5px;width:17.6px;height:22.5px;background:#3d3d3d;"></div>
<div style="position:absolute;left:105.4px;top:285.5px;width:14px;height:12.2px;overflow:hidden"><div style="width:14px;height:14px;border-radius:50%;background:linear-gradient(to bottom,#fff 0 71%,#a0a0a0 71%)"></div></div>
<div class="t" style="left:103.1px;top:298.1px;width:18.6px;text-align:center;font-size:7.2px;color:#e0e0e0">2.5</div>
<div style="position:absolute;left:122.2px;top:284.5px;width:17.6px;height:22.5px;background:#3d3d3d;"></div>
<div style="position:absolute;left:124.0px;top:285.5px;width:14px;height:12.2px;overflow:hidden"><div style="width:14px;height:14px;border-radius:50%;background:linear-gradient(to bottom,#fff 0 71%,#a0a0a0 71%)"></div></div>
<div class="t" style="left:121.7px;top:298.1px;width:18.6px;text-align:center;font-size:7.2px;color:#e0e0e0">3</div>
<div style="position:absolute;left:140.8px;top:284.5px;width:17.6px;height:22.5px;background:#3d3d3d;"></div>
<div style="position:absolute;left:142.6px;top:285.5px;width:14px;height:12.2px;overflow:hidden"><div style="width:14px;height:14px;border-radius:50%;background:linear-gradient(to bottom,#fff 0 71%,#a0a0a0 71%)"></div></div>
<div class="t" style="left:140.3px;top:298.1px;width:18.6px;text-align:center;font-size:7.2px;color:#e0e0e0">4</div>
<div style="position:absolute;left:159.4px;top:284.5px;width:17.6px;height:22.5px;background:#3d3d3d;"></div>
<div style="position:absolute;left:161.2px;top:285.5px;width:14px;height:12.2px;overflow:hidden"><div style="width:14px;height:14px;border-radius:50%;background:linear-gradient(to bottom,#fff 0 71%,#a0a0a0 71%)"></div></div>
<div class="t" style="left:158.9px;top:298.1px;width:18.6px;text-align:center;font-size:7.2px;color:#e0e0e0">5</div>
<div style="position:absolute;left:85.0px;top:308.0px;width:17.6px;height:22.5px;background:#3d3d3d;"></div>
<div style="position:absolute;left:86.8px;top:309.0px;width:14px;height:12.2px;overflow:hidden"><div style="width:14px;height:14px;border-radius:50%;background:linear-gradient(to bottom,#fff 0 71%,#a0a0a0 71%)"></div></div>
<div class="t" style="left:84.5px;top:321.6px;width:18.6px;text-align:center;font-size:7.2px;color:#e0e0e0">6</div>
<div style="position:absolute;left:103.6px;top:308.0px;width:17.6px;height:22.5px;background:#3d3d3d;"></div>
<div style="position:absolute;left:105.4px;top:309.0px;width:14px;height:12.2px;overflow:hidden"><div style="width:14px;height:14px;border-radius:50%;background:linear-gradient(to bottom,#fff 0 71%,#a0a0a0 71%)"></div></div>
<div class="t" style="left:103.1px;top:321.6px;width:18.6px;text-align:center;font-size:7.2px;color:#e0e0e0">7</div>
<div style="position:absolute;left:122.2px;top:308.0px;width:17.6px;height:22.5px;background:#3d3d3d;"></div>
<div style="position:absolute;left:124.0px;top:309.0px;width:14px;height:12.2px;overflow:hidden"><div style="width:14px;height:14px;border-radius:50%;background:linear-gradient(to bottom,#fff 0 71%,#a0a0a0 71%)"></div></div>
<div class="t" style="left:121.7px;top:321.6px;width:18.6px;text-align:center;font-size:7.2px;color:#e0e0e0">8</div>
<div style="position:absolute;left:140.8px;top:308.0px;width:17.6px;height:22.5px;background:#3d3d3d;"></div>
<div style="position:absolute;left:142.6px;top:309.0px;width:14px;height:12.2px;overflow:hidden"><div style="width:14px;height:14px;border-radius:50%;background:linear-gradient(to bottom,#fff 0 71%,#a0a0a0 71%)"></div></div>
<div class="t" style="left:140.3px;top:321.6px;width:18.6px;text-align:center;font-size:7.2px;color:#e0e0e0">10</div>
<div style="position:absolute;left:159.4px;top:308.0px;width:17.6px;height:22.5px;background:#68718c;"></div>
<div style="position:absolute;left:161.2px;top:309.0px;width:14px;height:12.2px;overflow:hidden"><div style="width:14px;height:14px;border-radius:50%;background:linear-gradient(to bottom,#fff 0 71%,#a0a0a0 71%)"></div></div>
<div class="t" style="left:158.9px;top:321.6px;width:18.6px;text-align:center;font-size:7.2px;color:#e0e0e0">12</div>
<div style="position:absolute;left:85.0px;top:331.5px;width:17.6px;height:22.5px;background:#3d3d3d;"></div>
<div style="position:absolute;left:86.8px;top:332.5px;width:14px;height:12.2px;overflow:hidden"><div style="width:14px;height:14px;border-radius:50%;background:linear-gradient(to bottom,#fff 0 71%,#a0a0a0 71%)"></div></div>
<div class="t" style="left:84.5px;top:345.1px;width:18.6px;text-align:center;font-size:7.2px;color:#e0e0e0">15</div>
<div style="position:absolute;left:103.6px;top:331.5px;width:17.6px;height:22.5px;background:#3d3d3d;"></div>
<div style="position:absolute;left:105.4px;top:332.5px;width:14px;height:12.2px;overflow:hidden"><div style="width:14px;height:14px;border-radius:50%;background:linear-gradient(to bottom,#fff 0 71%,#a0a0a0 71%)"></div></div>
<div class="t" style="left:103.1px;top:345.1px;width:18.6px;text-align:center;font-size:7.2px;color:#e0e0e0">17</div>
<div style="position:absolute;left:122.2px;top:331.5px;width:17.6px;height:22.5px;background:#3d3d3d;"></div>
<div style="position:absolute;left:124.0px;top:332.5px;width:14px;height:12.2px;overflow:hidden"><div style="width:14px;height:14px;border-radius:50%;background:linear-gradient(to bottom,#fff 0 71%,#a0a0a0 71%)"></div></div>
<div class="t" style="left:121.7px;top:345.1px;width:18.6px;text-align:center;font-size:7.2px;color:#e0e0e0">20</div>
<div style="position:absolute;left:140.8px;top:331.5px;width:17.6px;height:22.5px;background:#3d3d3d;"></div>
<div style="position:absolute;left:142.6px;top:332.5px;width:14px;height:12.2px;overflow:hidden"><div style="width:14px;height:14px;border-radius:50%;background:linear-gradient(to bottom,#fff 0 71%,#a0a0a0 71%)"></div></div>
<div class="t" style="left:140.3px;top:345.1px;width:18.6px;text-align:center;font-size:7.2px;color:#e0e0e0">25</div>
<div style="position:absolute;left:159.4px;top:331.5px;width:17.6px;height:22.5px;background:#3d3d3d;"></div>
<div style="position:absolute;left:161.2px;top:332.5px;width:14px;height:12.2px;overflow:hidden"><div style="width:14px;height:14px;border-radius:50%;background:linear-gradient(to bottom,#fff 0 71%,#a0a0a0 71%)"></div></div>
<div class="t" style="left:158.9px;top:345.1px;width:18.6px;text-align:center;font-size:7.2px;color:#e0e0e0">30</div>
<div style="position:absolute;left:85.0px;top:355.0px;width:17.6px;height:22.5px;background:#3d3d3d;"></div>
<div style="position:absolute;left:86.8px;top:356.0px;width:14px;height:12.2px;overflow:hidden"><div style="width:14px;height:14px;border-radius:50%;background:linear-gradient(to bottom,#fff 0 71%,#a0a0a0 71%)"></div></div>
<div class="t" style="left:84.5px;top:368.6px;width:18.6px;text-align:center;font-size:7.2px;color:#e0e0e0">40</div>
<div style="position:absolute;left:103.6px;top:355.0px;width:17.6px;height:22.5px;background:#3d3d3d;"></div>
<div style="position:absolute;left:105.4px;top:356.0px;width:14px;height:12.2px;overflow:hidden"><div style="width:14px;height:14px;border-radius:50%;background:linear-gradient(to bottom,#fff 0 71%,#a0a0a0 71%)"></div></div>
<div class="t" style="left:103.1px;top:368.6px;width:18.6px;text-align:center;font-size:7.2px;color:#e0e0e0">50</div>
<div style="position:absolute;left:122.2px;top:355.0px;width:17.6px;height:22.5px;background:#3d3d3d;"></div>
<div style="position:absolute;left:124.0px;top:356.0px;width:14px;height:12.2px;overflow:hidden"><div style="width:14px;height:14px;border-radius:50%;background:linear-gradient(to bottom,#fff 0 71%,#a0a0a0 71%)"></div></div>
<div class="t" style="left:121.7px;top:368.6px;width:18.6px;text-align:center;font-size:7.2px;color:#e0e0e0">60</div>
<div style="position:absolute;left:140.8px;top:355.0px;width:17.6px;height:22.5px;background:#3d3d3d;"></div>
<div style="position:absolute;left:142.6px;top:356.0px;width:14px;height:12.2px;overflow:hidden"><div style="width:14px;height:14px;border-radius:50%;background:linear-gradient(to bottom,#fff 0 71%,#a0a0a0 71%)"></div></div>
<div class="t" style="left:140.3px;top:368.6px;width:18.6px;text-align:center;font-size:7.2px;color:#e0e0e0">70</div>
<div style="position:absolute;left:159.4px;top:355.0px;width:17.6px;height:22.5px;background:#3d3d3d;"></div>
<div style="position:absolute;left:161.2px;top:356.0px;width:14px;height:12.2px;overflow:hidden"><div style="width:14px;height:14px;border-radius:50%;background:linear-gradient(to bottom,#fff 0 71%,#a0a0a0 71%)"></div></div>
<div class="t" style="left:158.9px;top:368.6px;width:18.6px;text-align:center;font-size:7.2px;color:#e0e0e0">80</div>
<div style="position:absolute;left:85.0px;top:378.5px;width:17.6px;height:22.5px;background:#3d3d3d;"></div>
<div style="position:absolute;left:86.8px;top:379.5px;width:14px;height:12.2px;overflow:hidden"><div style="width:14px;height:14px;border-radius:50%;background:linear-gradient(to bottom,#fff 0 71%,#a0a0a0 71%)"></div></div>
<div class="t" style="left:84.5px;top:392.1px;width:18.6px;text-align:center;font-size:7.2px;color:#e0e0e0">100</div>
<div style="position:absolute;left:102.6px;top:377.5px;width:74.4px;height:24.5px;background:#454545;"></div>
<div style="position:absolute;left:183px;top:41px;width:98px;height:3px;background:#373737;"></div>
<div style="position:absolute;left:183px;top:44px;width:98px;height:10px;background:#3a3a3a;"></div>
<svg style="left:187.0px;top:46.5px" width="6" height="6" viewBox="0 0 6 6"><path d="M0.5 1H5.5M0.5 3H5.5M0.5 5H5.5" stroke="#7a7a7a" stroke-width="1"/></svg>
<div style="position:absolute;left:196px;top:44px;width:17px;height:10px;background:#474747;"></div>
<div style="position:absolute;left:200px;top:46.5px;width:9px;height:5px;background:#777;border:1px solid #999"></div>
<div style="position:absolute;left:214px;top:44px;width:52px;height:10px;background:#4c4c4c;"></div>
<svg style="left:217px;top:46px" width="9" height="8" viewBox="0 0 9 8"><rect x="1" y="1" width="7" height="6" rx="1" stroke="#ccc" stroke-width="0.9" fill="none"/><rect x="2.5" y="2.5" width="4" height="3" fill="#aaa"/></svg>
<div class="t" style="left:230px;top:47.2px;font-size:5.8px;color:#d4d4d4;font-weight:bold">ナビゲーター</div>
<div style="position:absolute;left:183px;top:54px;width:98px;height:2px;background:#3e3e3e;"></div>
<div style="position:absolute;left:183px;top:56px;width:98px;height:111px;background:#4a4a4a;"></div>
<div style="position:absolute;left:183px;top:135.5px;width:98px;height:1px;background:#3c3c3c;"></div>
<div style="position:absolute;left:183px;top:136.5px;width:98px;height:30px;background:#4b4b4b;"></div>
<svg style="left:211px;top:140.7px" width="10" height="10" viewBox="0 0 10 10"><circle cx="5" cy="5" r="4.3" stroke="#6c6c6c" stroke-width="1" fill="none"/><path d="M3 5 H7" stroke="#6c6c6c" stroke-width="1.1"/></svg>
<svg style="left:224.6px;top:140.7px" width="10" height="10" viewBox="0 0 10 10"><circle cx="5" cy="5" r="4.3" stroke="#6c6c6c" stroke-width="1" fill="none"/><path d="M3 5 H7 M5 3 V7" stroke="#6c6c6c" stroke-width="1.1"/></svg>
<svg style="left:238.6px;top:140.7px" width="10" height="10" viewBox="0 0 10 10"><circle cx="5" cy="5" r="4.3" stroke="#6c6c6c" stroke-width="1" fill="none"/><rect x="3" y="3" width="4" height="4" fill="#6c6c6c"/></svg>
<svg style="left:211px;top:155px" width="10" height="10" viewBox="0 0 10 10"><circle cx="5" cy="5" r="4.3" stroke="#6c6c6c" stroke-width="1" fill="none" stroke-dasharray="22 5"/><path d="M3 5 L5 3 M3 5 L5 7" stroke="#6c6c6c" stroke-width="1"/></svg>
<svg style="left:224.6px;top:155px" width="10" height="10" viewBox="0 0 10 10"><circle cx="5" cy="5" r="4.3" stroke="#6c6c6c" stroke-width="1" fill="none" stroke-dasharray="22 5"/><path d="M7 5 L5 3 M7 5 L5 7" stroke="#6c6c6c" stroke-width="1"/></svg>
<svg style="left:238.6px;top:155px" width="10" height="10" viewBox="0 0 10 10"><circle cx="5" cy="5" r="4.3" stroke="#6c6c6c" stroke-width="1" fill="none" stroke-dasharray="22 5"/><circle cx="5" cy="5.5" r="1.3" fill="#6c6c6c"/></svg>
<div style="position:absolute;left:252.5px;top:139px;width:1px;height:25px;background:#5c5c5c;"></div>
<svg style="left:255.6px;top:140.7px" width="10" height="10" viewBox="0 0 10 10"><circle cx="3.5" cy="3.5" r="2.3" stroke="#6c6c6c" stroke-width="1" fill="none"/><circle cx="6.5" cy="6.5" r="2.3" stroke="#6c6c6c" stroke-width="1" fill="none"/></svg>
<svg style="left:269.8px;top:140.7px" width="10" height="10" viewBox="0 0 10 10"><rect x="1" y="1" width="8" height="8" rx="1" stroke="#6c6c6c" stroke-width="1" fill="none"/><path d="M1 1 L9 9" stroke="#6c6c6c" stroke-width="1"/></svg>
<svg style="left:255.6px;top:155px" width="10" height="10" viewBox="0 0 10 10"><path d="M5 0.5 V9.5" stroke="#6c6c6c" stroke-width="0.8"/><path d="M0.5 2.5 L4 5 L0.5 7.5Z" stroke="#6c6c6c" stroke-width="0.9" fill="none"/><path d="M9.5 2.5 L6 5 L9.5 7.5Z" fill="#6c6c6c"/></svg>
<svg style="left:269.8px;top:155px" width="10" height="10" viewBox="0 0 10 10"><path d="M5 5 V5" stroke="#6c6c6c"/><path d="M2 0.5 H8 L5 4.5Z" fill="#6c6c6c"/><path d="M2 9.5 H8 L5 5.5Z" stroke="#6c6c6c" stroke-width="0.9" fill="none"/></svg>
<div style="position:absolute;left:183px;top:167px;width:98px;height:4px;background:#3a3a3a;"></div>
<div style="position:absolute;left:183px;top:171px;width:98px;height:10px;background:#3a3a3a;"></div>
<svg style="left:187.0px;top:173.5px" width="6" height="6" viewBox="0 0 6 6"><path d="M0.5 1H5.5M0.5 3H5.5M0.5 5H5.5" stroke="#7a7a7a" stroke-width="1"/></svg>
<div style="position:absolute;left:196px;top:172px;width:42px;height:9px;background:#4c4c4c;"></div>
<svg style="left:198px;top:171.5px" width="10" height="11" viewBox="0 0 10 11"><path d="M5 0.5 L9.5 3 V8 L5 10.5 L0.5 8 V3Z" fill="#ccc"/><path d="M0.5 4.5 L5 7 L9.5 4.5 M0.5 6.5 L5 9 L9.5 6.5" stroke="#4c4c4c" stroke-width="0.8" fill="none"/></svg>
<div class="t" style="left:212px;top:173.5px;font-size:5.8px;color:#dcdcdc;font-weight:bold">レイヤー</div>
<div style="position:absolute;left:238px;top:172px;width:16px;height:9px;background:#474747;"></div>
<svg style="left:241px;top:173px" width="10" height="8" viewBox="0 0 10 8"><path d="M1 6 Q5 1 9 6" stroke="#888" stroke-width="0.9" fill="none"/></svg>
<div style="position:absolute;left:183px;top:181px;width:98px;height:48px;background:#4a4a4a;"></div>
<svg style="left:196px;top:183px" width="8" height="11" viewBox="0 0 8 11"><path d="M1 4 L4 1 L7 4 M1 7 L4 10 L7 7" stroke="#bbb" stroke-width="0.9" fill="none"/></svg>
<svg style="left:223px;top:183px" width="8" height="11" viewBox="0 0 8 11"><path d="M1 4 L4 1 L7 4 M1 7 L4 10 L7 7" stroke="#bbb" stroke-width="0.9" fill="none"/></svg>
<div style="position:absolute;left:235px;top:186px;width:22px;height:5px;background:#4a4a4a;border:1px solid #777"></div>
<div style="position:absolute;left:183px;top:198px;width:98px;height:14px;background:#464646;"></div>
<div style="position:absolute;left:263px;top:198px;width:18px;height:14px;background:#4a4a4a;"></div>
<svg style="left:272px;top:199px" width="8" height="11" viewBox="0 0 8 11"><path d="M1 4 L4 1 L7 4 M1 7 L4 10 L7 7" stroke="#aaa" stroke-width="0.9" fill="none"/></svg>
<svg style="left:200px;top:200px" width="9" height="10" viewBox="0 0 9 10"><rect x="1.5" y="1.5" width="6" height="6" fill="#777"/></svg>
<svg style="left:215px;top:200px" width="9" height="10" viewBox="0 0 9 10"><path d="M4.5 1 V8 M2 4 H7 M1 2 L8 2" stroke="#777" stroke-width="0.9"/></svg>
<svg style="left:230px;top:200px" width="9" height="10" viewBox="0 0 9 10"><rect x="1.5" y="4" width="6" height="5" fill="#777"/><path d="M3 4 V2.5 Q4.5 0.5 6 2.5 V4" stroke="#777" stroke-width="0.9" fill="none"/></svg>
<svg style="left:245px;top:200px" width="9" height="10" viewBox="0 0 9 10"><path d="M1 8 L8 1 M2 2 L3 3 M6 6 L7 7" stroke="#777" stroke-width="1"/></svg>
<svg style="left:186px;top:215.5px" width="10" height="10" viewBox="0 0 10 10"><rect x="1" y="1" width="8" height="8" rx="2" stroke="#777" stroke-width="0.9" fill="none"/></svg>
<svg style="left:202px;top:215.5px" width="10" height="10" viewBox="0 0 10 10"><path d="M1 2 H4 L5 3 H9 V9 H1Z" fill="#777"/></svg>
<svg style="left:218px;top:215.5px" width="10" height="10" viewBox="0 0 10 10"><rect x="1" y="4" width="5" height="5" stroke="#777" stroke-width="0.9" fill="none"/><rect x="4" y="1" width="5" height="5" stroke="#777" stroke-width="0.9" fill="none"/></svg>
<svg style="left:234px;top:215.5px" width="10" height="10" viewBox="0 0 10 10"><rect x="1" y="4" width="5" height="5" stroke="#777" stroke-width="0.9" fill="none"/><rect x="4" y="1" width="5" height="5" stroke="#777" stroke-width="0.9" fill="none"/></svg>
<svg style="left:250px;top:215.5px" width="10" height="10" viewBox="0 0 10 10"><rect x="1" y="1" width="8" height="8" rx="1.5" fill="#777"/><circle cx="5" cy="5" r="2" fill="#4a4a4a"/></svg>
<svg style="left:266px;top:215.5px" width="10" height="10" viewBox="0 0 10 10"><path d="M2 2 H8 L7.5 9 H2.5Z" stroke="#666" stroke-width="0.9" fill="none"/></svg>
<div style="position:absolute;left:303px;top:28px;width:19px;height:18px;background:#68718c;"></div>
<svg style="left:286.5px;top:31.0px" width="12" height="12" viewBox="0 0 12 12"><path d="M1 2.5 H11 M1 6 H11 M1 9.5 H11" stroke="#d0d0d0" stroke-width="1.2"/></svg>
<svg style="left:306.0px;top:31.0px" width="12" height="12" viewBox="0 0 12 12"><rect x="1.5" y="3" width="8" height="8" stroke="#d0d0d0" stroke-width="1" fill="none"/><path d="M4 8 L10 1.5 L11.5 3 L5 9.5Z" fill="#d0d0d0"/></svg>
<svg style="left:322.5px;top:31.0px" width="12" height="12" viewBox="0 0 12 12"><path d="M2 4.5 L6 1 L10 4.5 M2 7.5 L6 11 L10 7.5" stroke="#d0d0d0" stroke-width="1" fill="none"/></svg>
<svg style="left:337.5px;top:31.0px" width="12" height="12" viewBox="0 0 12 12"><rect x="1" y="1.5" width="10" height="9.5" rx="1.5" stroke="#d0d0d0" stroke-width="1" fill="none"/><circle cx="6" cy="6.3" r="3" stroke="#d0d0d0" stroke-width="0.9" fill="none"/><circle cx="6" cy="6.3" r="1.3" stroke="#d0d0d0" stroke-width="0.7" fill="none"/><circle cx="10.5" cy="1.5" r="1.5" fill="#e04040"/></svg>
<div style="position:absolute;left:356px;top:30px;width:1px;height:14px;background:#5a5a5a;"></div>
<svg style="left:363.0px;top:31.0px" width="12" height="12" viewBox="0 0 12 12"><path d="M2 1 H7 L9 3 V7 M2 1 V11 H6" stroke="#d0d0d0" stroke-width="1" fill="none"/><circle cx="8.5" cy="9" r="2.5" stroke="#d0d0d0" stroke-width="0.9" fill="#484848"/><path d="M7.2 9 H9.8 M8.5 7.7 V10.3" stroke="#d0d0d0" stroke-width="0.7"/></svg>
<svg style="left:382.5px;top:31.0px" width="12" height="12" viewBox="0 0 12 12"><path d="M1 3 H4 L5 4 H10 V10 H1Z" stroke="#d0d0d0" stroke-width="1" fill="#d0d0d0" fill-opacity="0.3"/><path d="M8 1 L11 3" stroke="#d0d0d0" stroke-width="0.8"/></svg>
<svg style="left:402.5px;top:31.0px" width="12" height="12" viewBox="0 0 12 12"><path d="M6 2 L10 9 H2Z" stroke="#6e6e6e" stroke-width="1" fill="none"/><path d="M1 10 H11" stroke="#6e6e6e" stroke-width="1"/></svg>
<svg style="left:421.5px;top:31.0px" width="12" height="12" viewBox="0 0 12 12"><path d="M2 1 H8 L10 3 V11 H2Z" stroke="#d0d0d0" stroke-width="1" fill="none"/><rect x="4" y="4" width="6" height="4" fill="#d0d0d0" opacity="0.7"/></svg>
<svg style="left:442.0px;top:31.0px" width="12" height="12" viewBox="0 0 12 12"><path d="M2 1 H8 L10 3 V11 H2Z" stroke="#d0d0d0" stroke-width="1" fill="none"/><rect x="4" y="4" width="6" height="4" fill="#d0d0d0" opacity="0.7"/></svg>
<svg style="left:462.0px;top:31.0px" width="12" height="12" viewBox="0 0 12 12"><path d="M2 1 H8 L10 3 V11 H2Z" stroke="#6e6e6e" stroke-width="1" fill="none"/><rect x="4" y="4" width="6" height="4" fill="#6e6e6e" opacity="0.7"/></svg>
<div style="position:absolute;left:480px;top:30px;width:1px;height:14px;background:#5a5a5a;"></div>
<svg style="left:485.0px;top:31.0px" width="12" height="12" viewBox="0 0 12 12"><path d="M3 3 H7 Q10 3 10 6.5 Q10 10 7 10 H4 M3 3 L5 1 M3 3 L5 5" stroke="#6e6e6e" stroke-width="1.1" fill="none"/></svg>
<svg style="left:506.5px;top:31.0px" width="12" height="12" viewBox="0 0 12 12"><path d="M9 3 H5 Q2 3 2 6.5 Q2 10 5 10 H8 M9 3 L7 1 M9 3 L7 5" stroke="#6e6e6e" stroke-width="1.1" fill="none"/></svg>
<div style="position:absolute;left:524px;top:30px;width:1px;height:14px;background:#5a5a5a;"></div>
<svg style="left:530.0px;top:31.0px" width="12" height="12" viewBox="0 0 12 12"><circle cx="6" cy="6" r="4" stroke="#6e6e6e" stroke-width="1" fill="none" stroke-dasharray="1.5 1"/></svg>
<svg style="left:549.0px;top:31.0px" width="12" height="12" viewBox="0 0 12 12"><rect x="2" y="2" width="8" height="8" stroke="#6e6e6e" stroke-width="1" fill="none"/><path d="M6 10 V12" stroke="#6e6e6e"/></svg>
<svg style="left:569.5px;top:31.0px" width="12" height="12" viewBox="0 0 12 12"><path d="M1 6 L6 1 L11 6 L6 11Z" fill="#6e6e6e"/></svg>
<svg style="left:589.0px;top:31.0px" width="12" height="12" viewBox="0 0 12 12"><path d="M1 3 H11 M1 9 H11 M3 1 V11 M9 1 V11" stroke="#6e6e6e" stroke-width="1" fill="none"/></svg>
<div style="position:absolute;left:608.5px;top:30px;width:1px;height:14px;background:#5a5a5a;"></div>
<svg style="left:615.0px;top:31.0px" width="12" height="12" viewBox="0 0 12 12"><rect x="1.5" y="1.5" width="9" height="9" stroke="#6e6e6e" stroke-width="1" fill="none"/><path d="M1.5 1.5 L10.5 10.5" stroke="#6e6e6e"/></svg>
<svg style="left:635.0px;top:31.0px" width="12" height="12" viewBox="0 0 12 12"><path d="M11 1 V11 H1Z" fill="#6e6e6e"/></svg>
<svg style="left:654.0px;top:31.0px" width="12" height="12" viewBox="0 0 12 12"><rect x="2" y="2" width="8" height="8" stroke="#6e6e6e" stroke-width="1.3" fill="none"/></svg>
<div style="position:absolute;left:673px;top:30px;width:1px;height:14px;background:#5a5a5a;"></div>
<svg style="left:679.0px;top:31.0px" width="12" height="12" viewBox="0 0 12 12"><path d="M2 4 V10 H10 M3 9 L10 2" stroke="#6e6e6e" stroke-width="1" fill="none"/></svg>
<svg style="left:699.0px;top:31.0px" width="12" height="12" viewBox="0 0 12 12"><path d="M2 4 V10 H10 M3 9 L10 2" stroke="#6e6e6e" stroke-width="1" fill="none"/></svg>
<svg style="left:720.0px;top:31.0px" width="12" height="12" viewBox="0 0 12 12"><path d="M2 4 V10 H10 M3 9 L10 2" stroke="#6e6e6e" stroke-width="1" fill="none"/></svg>
<div style="position:absolute;left:737.5px;top:30px;width:1px;height:14px;background:#5a5a5a;"></div>
<svg style="left:743.0px;top:31.0px" width="12" height="12" viewBox="0 0 12 12"><path d="M1 5 L6 2.5 L11 5 L6 7.5Z" stroke="#d0d0d0" stroke-width="1" fill="none"/><path d="M3 6 V9 Q6 11 9 9 V6" stroke="#d0d0d0" stroke-width="1" fill="none"/><circle cx="10.5" cy="1.5" r="1" fill="#d0d0d0"/></svg>
<svg style="left:764.0px;top:31.0px" width="12" height="12" viewBox="0 0 12 12"><circle cx="6" cy="6" r="4.8" stroke="#d0d0d0" stroke-width="1" fill="none"/><path d="M4.5 4.5 Q4.5 3 6 3 Q7.5 3 7.5 4.5 Q7.5 5.5 6 6.3 V7.3" stroke="#d0d0d0" stroke-width="1" fill="none"/><circle cx="6" cy="8.8" r="0.6" fill="#d0d0d0"/><circle cx="10.5" cy="1.5" r="1" fill="#d0d0d0"/></svg>
<div style="position:absolute;left:282px;top:48px;width:88px;height:10px;background:#68718c;"></div>
<div class="t" style="left:285px;top:49.8px;font-size:6.3px;color:#e2e6f0;font-weight:bold;letter-spacing:0.2px">×  〇月〇日　アラバスタにて</div>
<svg style="left:786px;top:48px" width="10" height="8" viewBox="0 0 10 8"><path d="M1 2 L5 6 L9 2" stroke="#ccc" stroke-width="1.1" fill="none"/></svg>
<div style="position:absolute;left:286px;top:62.3px;width:120.5px;height:95px;background:#3c3c3c;box-shadow:1px 1px 0.5px #232323"></div>
<svg style="left:291px;top:72.89999999999999px;overflow:hidden" width="52" height="73" viewBox="0 0 52 73"><rect x="0" y="0" width="52" height="73" fill="#fff"/><rect x="4.5" y="6.5" width="44" height="61" fill="#f6f8f7"/><rect x="6.7" y="8.6" width="40" height="56.5" fill="none" stroke="#cddbd4" stroke-width="0.8"/><rect x="8.5" y="11.5" width="36.5" height="51" fill="#fff" stroke="#cdd0d4" stroke-width="0.9"/><rect x="6" y="9.3" width="41" height="1.6" fill="#ebeded"/><path d="M3.5 6.5H49.5M3.5 67.5H49.5M4.5 5V69M48.5 5V69" stroke="#b9bbcf" stroke-width="1.3"/><circle cx="26" cy="6.3" r="1.2" fill="#a4a4b0"/><circle cx="26" cy="67.7" r="1.2" fill="#a4a4b0"/><circle cx="4.3" cy="36.5" r="1.2" fill="#a4a4b0"/><circle cx="48.7" cy="36.5" r="1.2" fill="#a4a4b0"/></svg>
<div class="t" style="left:291px;top:148.3px;width:52px;text-align:center;font-size:8px;color:#bcbcbc">7</div>
<svg style="left:349px;top:72.89999999999999px;overflow:hidden" width="52" height="73" viewBox="0 0 52 73"><rect x="0" y="0" width="52" height="73" fill="#fff"/><rect x="4.5" y="6.5" width="44" height="61" fill="#f6f8f7"/><rect x="6.7" y="8.6" width="40" height="56.5" fill="none" stroke="#cddbd4" stroke-width="0.8"/><rect x="8.5" y="11.5" width="36.5" height="51" fill="#fff" stroke="#cdd0d4" stroke-width="0.9"/><rect x="6" y="9.3" width="41" height="1.6" fill="#ebeded"/><path d="M3.5 6.5H49.5M3.5 67.5H49.5M4.5 5V69M48.5 5V69" stroke="#b9bbcf" stroke-width="1.3"/><circle cx="26" cy="6.3" r="1.2" fill="#a4a4b0"/><circle cx="26" cy="67.7" r="1.2" fill="#a4a4b0"/><circle cx="4.3" cy="36.5" r="1.2" fill="#a4a4b0"/><circle cx="48.7" cy="36.5" r="1.2" fill="#a4a4b0"/></svg>
<div class="t" style="left:349px;top:148.3px;width:52px;text-align:center;font-size:8px;color:#bcbcbc">6</div>
<div style="position:absolute;left:413px;top:62.3px;width:120.5px;height:95px;background:#3c3c3c;box-shadow:1px 1px 0.5px #232323"></div>
<div style="position:absolute;left:474px;top:62.3px;width:58px;height:95px;background:#68718c;"></div>
<svg style="left:418px;top:72.89999999999999px;overflow:hidden" width="52" height="73" viewBox="0 0 52 73"><rect x="0" y="0" width="52" height="73" fill="#fff"/><rect x="4.5" y="6.5" width="44" height="61" fill="#f6f8f7"/><rect x="6.7" y="8.6" width="40" height="56.5" fill="none" stroke="#cddbd4" stroke-width="0.8"/><rect x="8.5" y="11.5" width="36.5" height="51" fill="#fff" stroke="#cdd0d4" stroke-width="0.9"/><rect x="6" y="9.3" width="41" height="1.6" fill="#ebeded"/><path d="M3.5 6.5H49.5M3.5 67.5H49.5M4.5 5V69M48.5 5V69" stroke="#b9bbcf" stroke-width="1.3"/><circle cx="26" cy="6.3" r="1.2" fill="#a4a4b0"/><circle cx="26" cy="67.7" r="1.2" fill="#a4a4b0"/><circle cx="4.3" cy="36.5" r="1.2" fill="#a4a4b0"/><circle cx="48.7" cy="36.5" r="1.2" fill="#a4a4b0"/></svg>
<div class="t" style="left:418px;top:148.3px;width:52px;text-align:center;font-size:8px;color:#bcbcbc">5</div>
<svg style="left:476px;top:72.89999999999999px;overflow:hidden" width="52" height="73" viewBox="0 0 52 73"><rect x="0" y="0" width="52" height="73" fill="#fff"/><rect x="4.5" y="6.5" width="44" height="61" fill="#f6f8f7"/><rect x="6.7" y="8.6" width="40" height="56.5" fill="none" stroke="#cddbd4" stroke-width="0.8"/><rect x="8.5" y="11.5" width="36.5" height="51" fill="#fff" stroke="#cdd0d4" stroke-width="0.9"/><rect x="6" y="9.3" width="41" height="1.6" fill="#ebeded"/><path d="M3.5 6.5H49.5M3.5 67.5H49.5M4.5 5V69M48.5 5V69" stroke="#b9bbcf" stroke-width="1.3"/><circle cx="26" cy="6.3" r="1.2" fill="#a4a4b0"/><circle cx="26" cy="67.7" r="1.2" fill="#a4a4b0"/><circle cx="4.3" cy="36.5" r="1.2" fill="#a4a4b0"/><circle cx="48.7" cy="36.5" r="1.2" fill="#a4a4b0"/><path d="M21.0 19.5 Q20.2 17.8 21.6 15.6 Q22.7 13.6 25.2 13.9" stroke="#9aa4dc" stroke-width="0.4" fill="none" opacity="0.7"/><path d="M24.2 24.0 Q22.3 21.5 22.4 20.5 Q23.3 18.7 21.8 16.5" stroke="#9aa4dc" stroke-width="0.4" fill="none" opacity="0.7"/><path d="M23.5 60.8 Q24.5 59.4 27.4 60.0 Q29.8 57.9 30.5 57.5" stroke="#9aa4dc" stroke-width="0.4" fill="none" opacity="0.7"/><path d="M29.8 43.9 Q28.0 44.8 25.9 45.1 Q24.1 46.4 22.1 46.3 Q21.4 46.7 18.4 47.8 Q16.5 50.2 16.2 51.1" stroke="#9aa4dc" stroke-width="0.4" fill="none" opacity="0.7"/><path d="M12.8 27.0 Q10.5 27.3 9.3 25.0 Q9.0 26.5 9.0 26.6 Q9.0 27.2 9.0 30.3" stroke="#9aa4dc" stroke-width="0.4" fill="none" opacity="0.7"/><path d="M32.7 50.2 Q30.3 50.1 28.7 49.9 Q26.2 47.4 25.9 47.1 Q24.5 45.5 22.0 46.2" stroke="#9aa4dc" stroke-width="0.4" fill="none" opacity="0.7"/><path d="M34.9 27.5 Q33.7 25.3 33.6 23.7 Q32.6 21.6 34.0 19.7 Q31.7 17.0 31.5 16.6 Q30.3 14.0 31.2 12.6" stroke="#9aa4dc" stroke-width="0.4" fill="none" opacity="0.7"/><path d="M23.3 55.6 Q24.6 55.1 27.1 56.6 Q29.3 57.4 31.1 57.1 Q32.2 58.6 32.3 60.9" stroke="#9aa4dc" stroke-width="0.4" fill="none" opacity="0.7"/><path d="M17.8 16.1 Q19.7 17.0 21.7 17.4 Q22.3 16.6 25.5 16.3 Q27.4 16.5 28.9 14.2 Q30.9 14.3 32.9 13.7" stroke="#9aa4dc" stroke-width="0.4" fill="none" opacity="0.7"/><path d="M33.0 14.7 Q34.7 14.6 37.0 15.0 Q38.6 12.3 39.6 12.0 Q38.1 12.0 38.2 12.0 Q35.7 12.0 35.6 12.0" stroke="#9aa4dc" stroke-width="0.4" fill="none" opacity="0.7"/><path d="M15.1 17.1 Q15.0 18.6 16.4 20.9 Q17.6 23.1 16.4 24.9" stroke="#9aa4dc" stroke-width="0.4" fill="none" opacity="0.7"/><path d="M26.1 17.8 Q23.6 17.1 22.2 18.3 Q21.0 17.3 18.6 16.4 Q17.5 14.0 16.2 13.2" stroke="#9aa4dc" stroke-width="0.4" fill="none" opacity="0.7"/><path d="M42.4 30.1 Q42.3 28.5 43.3 26.2 Q42.9 24.8 40.6 23.2" stroke="#9aa4dc" stroke-width="0.4" fill="none" opacity="0.7"/><path d="M40.9 29.8 Q39.5 30.8 39.0 33.3 Q38.4 34.9 35.2 34.6 Q34.2 34.4 31.5 33.0 Q29.6 33.1 27.6 34.0" stroke="#9aa4dc" stroke-width="0.4" fill="none" opacity="0.7"/><path d="M11.0 13.4 Q12.3 14.7 13.1 16.8 Q13.3 18.4 12.3 20.7 Q9.3 20.2 9.0 21.7" stroke="#9aa4dc" stroke-width="0.4" fill="none" opacity="0.7"/><path d="M26.0 28.9 Q24.4 28.0 22.9 26.3 Q21.6 24.7 22.4 22.3 Q24.6 21.7 25.3 19.7 Q25.9 19.0 28.2 16.8" stroke="#9aa4dc" stroke-width="0.4" fill="none" opacity="0.7"/><path d="M21.3 52.0 Q23.9 50.4 25.2 51.0 Q27.4 48.0 27.0 47.4 Q28.2 46.3 29.6 44.4" stroke="#9aa4dc" stroke-width="0.4" fill="none" opacity="0.7"/><path d="M30.8 41.8 Q29.8 42.2 28.6 45.1 Q27.3 44.6 24.7 46.2 Q21.9 46.8 20.9 44.9" stroke="#9aa4dc" stroke-width="0.4" fill="none" opacity="0.7"/><path d="M16.6 55.7 Q17.8 55.3 20.4 54.4 Q21.4 51.9 22.9 51.3" stroke="#9aa4dc" stroke-width="0.4" fill="none" opacity="0.7"/><path d="M40.9 29.7 Q39.2 29.6 37.4 27.8 Q36.1 24.9 36.7 23.9 Q37.4 22.6 36.2 19.9 Q37.1 17.0 36.6 15.9" stroke="#9aa4dc" stroke-width="0.4" fill="none" opacity="0.7"/><path d="M14.8 43.0 Q16.7 43.8 18.6 44.3 Q18.6 46.1 20.7 47.7" stroke="#9aa4dc" stroke-width="0.4" fill="none" opacity="0.7"/><path d="M18.4 25.8 Q17.2 24.9 18.5 21.8 Q16.4 22.1 15.1 19.8 Q12.9 17.7 12.4 16.9 Q11.8 15.4 9.6 14.0" stroke="#9aa4dc" stroke-width="0.4" fill="none" opacity="0.7"/><path d="M18.4 38.2 Q21.4 37.8 22.3 39.1 Q24.1 39.0 26.3 39.5 Q28.6 38.7 30.1 38.2" stroke="#9aa4dc" stroke-width="0.4" fill="none" opacity="0.7"/><path d="M17.2 27.1 Q17.1 28.7 16.2 31.0 Q15.9 32.8 17.6 34.8" stroke="#9aa4dc" stroke-width="0.4" fill="none" opacity="0.7"/><path d="M35.4 16.7 Q38.1 16.7 39.0 18.5 Q40.9 18.6 42.8 19.6" stroke="#9aa4dc" stroke-width="0.4" fill="none" opacity="0.7"/><path d="M16.7 27.9 Q15.5 26.8 14.5 24.5 Q13.1 22.7 11.5 21.9" stroke="#9aa4dc" stroke-width="0.4" fill="none" opacity="0.7"/><path d="M42.7 17.6 Q43.2 18.2 45.0 20.0 Q45.0 18.4 45.0 18.1" stroke="#9aa4dc" stroke-width="0.4" fill="none" opacity="0.7"/><path d="M14.4 33.1 Q15.9 31.7 17.2 30.3 Q18.2 28.3 20.0 27.4 Q21.2 28.3 24.0 27.1" stroke="#9aa4dc" stroke-width="0.4" fill="none" opacity="0.7"/><path d="M19.1 12.8 Q21.9 12.0 22.8 12.0 Q24.5 12.4 26.4 13.7 Q29.2 14.1 29.8 15.8" stroke="#9aa4dc" stroke-width="0.4" fill="none" opacity="0.7"/><path d="M14.4 38.3 Q12.0 38.5 10.9 40.3 Q9.5 39.4 9.0 38.3" stroke="#9aa4dc" stroke-width="0.4" fill="none" opacity="0.7"/><path d="M32.5 38.0 Q30.7 36.8 30.6 36.4 Q29.8 37.0 28.3 37.5 Q27.8 39.4 27.4 39.8" stroke="#5a68c8" stroke-width="0.5" fill="none" opacity="0.8"/><path d="M31.3 44.7 Q30.7 45.9 28.9 45.5 Q27.5 45.9 27.1 47.3 Q27.7 48.9 26.9 49.8" stroke="#5a68c8" stroke-width="0.5" fill="none" opacity="0.8"/><path d="M31.7 47.8 Q32.2 47.2 32.4 45.4 Q31.8 44.5 32.7 42.9" stroke="#5a68c8" stroke-width="0.5" fill="none" opacity="0.8"/><path d="M34.6 39.1 Q35.1 38.1 36.3 37.3 Q36.2 35.7 36.2 34.8 Q38.1 34.3 38.4 33.6 Q39.7 32.1 39.4 31.3" stroke="#5a68c8" stroke-width="0.5" fill="none" opacity="0.8"/><path d="M34.3 30.0 Q34.2 30.8 33.5 32.4 Q31.8 33.7 31.5 33.8 Q31.5 34.9 31.2 36.3" stroke="#5a68c8" stroke-width="0.5" fill="none" opacity="0.8"/><path d="M33.6 41.3 Q33.3 43.2 34.1 43.8 Q33.6 45.3 32.9 46.0 Q31.8 46.3 30.8 47.3 Q29.0 48.2 28.4 48.0" stroke="#5a68c8" stroke-width="0.5" fill="none" opacity="0.8"/><path d="M38.6 39.2 Q36.8 38.9 36.2 38.5 Q35.6 38.6 33.8 37.7 Q33.4 37.3 32.7 35.5 Q33.0 33.8 32.6 33.0" stroke="#5a68c8" stroke-width="0.5" fill="none" opacity="0.8"/><path d="M30.4 32.4 Q29.8 32.8 29.4 34.7 Q30.3 35.2 31.1 36.5" stroke="#5a68c8" stroke-width="0.5" fill="none" opacity="0.8"/><path d="M33.2 38.2 Q32.7 39.5 33.6 40.7 Q33.1 42.3 32.6 43.0 Q31.0 43.8 30.2 43.8 Q29.8 44.7 28.8 45.8" stroke="#5a68c8" stroke-width="0.5" fill="none" opacity="0.8"/><path d="M40.1 31.4 Q41.6 31.7 42.6 31.6 Q42.8 30.2 44.1 29.6 Q45.0 29.2 45.0 28.7" stroke="#5a68c8" stroke-width="0.5" fill="none" opacity="0.8"/><path d="M30.1 31.1 Q30.6 31.9 32.0 32.8 Q32.1 33.9 32.9 35.1 Q33.3 36.4 32.1 37.5 Q31.6 38.7 32.5 40.0" stroke="#5a68c8" stroke-width="0.5" fill="none" opacity="0.8"/><path d="M33.5 31.4 Q32.9 30.9 32.6 29.0 Q32.7 27.4 34.2 27.1 Q35.0 26.5 36.6 26.4" stroke="#5a68c8" stroke-width="0.5" fill="none" opacity="0.8"/><path d="M37.2 41.4 Q36.0 43.0 35.7 43.3 Q34.1 43.5 34.2 45.3" stroke="#5a68c8" stroke-width="0.5" fill="none" opacity="0.8"/><path d="M35.9 38.1 Q35.5 38.7 35.6 40.6 Q35.6 41.5 36.3 43.0" stroke="#5a68c8" stroke-width="0.5" fill="none" opacity="0.8"/><path d="M22.4 59.1 Q21.1 60.1 20.6 61.5 Q21.1 63.0 19.5 63.0" stroke="#7a86d4" stroke-width="0.45" fill="none" opacity="0.7"/><path d="M21.8 51.4 Q21.4 53.1 22.9 54.2 Q22.2 56.7 23.0 57.2" stroke="#7a86d4" stroke-width="0.45" fill="none" opacity="0.7"/><path d="M23.0 49.7 Q24.9 49.3 25.6 48.3 Q27.8 49.1 28.3 49.7 Q28.1 51.4 29.8 52.2" stroke="#7a86d4" stroke-width="0.45" fill="none" opacity="0.7"/><path d="M23.2 56.3 Q23.1 55.2 21.3 54.0 Q19.6 53.4 18.3 53.7 Q17.5 54.8 15.7 55.2" stroke="#7a86d4" stroke-width="0.45" fill="none" opacity="0.7"/><path d="M22.5 48.6 Q20.4 48.4 19.7 49.6 Q19.8 50.9 18.2 52.3 Q19.3 54.7 18.7 55.2 Q18.4 56.0 19.5 58.1" stroke="#7a86d4" stroke-width="0.45" fill="none" opacity="0.7"/><path d="M17.5 50.1 Q19.5 49.9 20.4 50.9 Q22.0 49.5 22.2 48.5" stroke="#7a86d4" stroke-width="0.45" fill="none" opacity="0.7"/><path d="M27.9 48.2 Q27.9 49.4 27.6 51.1 Q26.8 53.0 25.9 53.7" stroke="#7a86d4" stroke-width="0.45" fill="none" opacity="0.7"/><path d="M29.6 46.4 Q30.4 46.1 31.5 44.1 Q33.7 43.0 34.5 43.9 Q35.5 43.3 35.6 41.1" stroke="#7a86d4" stroke-width="0.45" fill="none" opacity="0.7"/><path d="M23.6 53.8 Q25.2 55.2 25.1 56.4 Q25.9 58.2 26.8 58.8 Q27.6 60.2 29.7 59.7" stroke="#7a86d4" stroke-width="0.45" fill="none" opacity="0.7"/><path d="M17.7 57.4 Q16.8 56.0 14.8 56.6 Q13.8 56.6 12.4 58.4 Q11.9 58.8 9.4 58.7" stroke="#7a86d4" stroke-width="0.45" fill="none" opacity="0.7"/><path d="M28.0 19.9 Q26.0 18.7 23.9 16.9 Q20.6 16.4 19.2 15.2" stroke="#b0b8e4" stroke-width="0.4" fill="none" opacity="0.6"/><path d="M10.4 17.4 Q9.1 17.1 9.0 16.9 Q9.0 19.7 9.0 19.5 Q9.0 18.0 9.0 19.7" stroke="#b0b8e4" stroke-width="0.4" fill="none" opacity="0.6"/><path d="M26.9 24.1 Q25.7 26.0 24.9 28.7 Q24.6 31.7 23.0 33.3 Q22.5 34.2 22.7 38.3" stroke="#b0b8e4" stroke-width="0.4" fill="none" opacity="0.6"/><path d="M19.9 27.2 Q19.4 30.8 20.0 32.2 Q20.6 35.0 23.1 36.1 Q26.9 37.1 27.7 38.2" stroke="#b0b8e4" stroke-width="0.4" fill="none" opacity="0.6"/><path d="M16.4 16.0 Q16.7 19.9 16.4 21.0 Q17.1 22.5 20.9 23.4 Q24.0 23.0 25.7 24.8 Q28.8 24.5 30.6 25.6" stroke="#b0b8e4" stroke-width="0.4" fill="none" opacity="0.6"/><path d="M13.8 13.4 Q17.7 15.0 18.6 14.8 Q20.9 12.6 22.0 12.0" stroke="#b0b8e4" stroke-width="0.4" fill="none" opacity="0.6"/><path d="M22.7 18.0 Q23.8 17.8 27.7 18.2 Q29.3 21.2 30.5 22.4" stroke="#b0b8e4" stroke-width="0.4" fill="none" opacity="0.6"/><path d="M22.9 25.8 Q25.1 26.9 25.8 29.9 Q26.9 31.5 28.3 34.2 Q28.1 37.2 28.1 39.2" stroke="#b0b8e4" stroke-width="0.4" fill="none" opacity="0.6"/><path d="M13 13 V26" stroke="#d07070" stroke-width="0.55" stroke-dasharray="1.6 0.8" opacity="0.7"/><path d="M14.5 13 V26" stroke="#d07070" stroke-width="0.55" stroke-dasharray="1.6 0.8" opacity="0.7"/><path d="M16 13 V26" stroke="#d07070" stroke-width="0.55" stroke-dasharray="1.6 0.8" opacity="0.7"/><path d="M38 12 V25" stroke="#d07070" stroke-width="0.55" stroke-dasharray="1.6 0.8" opacity="0.7"/><path d="M39.5 12 V25" stroke="#d07070" stroke-width="0.55" stroke-dasharray="1.6 0.8" opacity="0.7"/><path d="M41 12 V25" stroke="#d07070" stroke-width="0.55" stroke-dasharray="1.6 0.8" opacity="0.7"/><path d="M9 30 H45 M9 45 H45 M27 12 V30" stroke="#a8b0d8" stroke-width="0.5" opacity="0.7"/><path d="M30 37 Q30 33 34 33 Q38 33 37.5 37 Q37 41 34 41 Q30.5 41 30 37Z M17 50 Q17 46.5 20.5 46.5 Q24 46.5 23.5 50 Q23 53.5 20.5 53.5 Q17.5 53.5 17 50Z M16 22 Q20 18 24 22 M31 22 Q35 19 38 23" stroke="#4a58c0" stroke-width="0.55" fill="none" opacity="0.85"/><path d="M39.5 46.8 Q38.8 49.1 39.9 49.7 Q41.4 51.6 41.9 52.0 Q42.8 53.5 44.6 53.3" stroke="#e09090" stroke-width="0.4" fill="none" opacity="0.6"/><path d="M41.7 41.7 Q42.4 41.1 43.9 39.6 Q45.0 39.7 45.0 38.1 Q45.0 35.8 45.0 35.1" stroke="#e09090" stroke-width="0.4" fill="none" opacity="0.6"/><path d="M42.3 44.5 Q44.3 43.2 45.0 43.3 Q45.0 43.6 45.0 42.1 Q45.0 40.2 45.0 39.8" stroke="#e09090" stroke-width="0.4" fill="none" opacity="0.6"/><path d="M39.4 50.1 Q38.3 52.0 38.5 52.9 Q38.1 53.4 39.4 55.8 Q39.3 58.2 39.9 58.7 Q39.8 59.4 37.8 60.9" stroke="#e09090" stroke-width="0.4" fill="none" opacity="0.6"/></svg>
<div class="t" style="left:476px;top:148.3px;width:52px;text-align:center;font-size:8px;color:#bcbcbc">4</div>
<div style="position:absolute;left:540px;top:62.3px;width:120.5px;height:95px;background:#3c3c3c;box-shadow:1px 1px 0.5px #232323"></div>
<svg style="left:545px;top:72.89999999999999px;overflow:hidden" width="52" height="73" viewBox="0 0 52 73"><rect x="0" y="0" width="52" height="73" fill="#fff"/><rect x="4.5" y="6.5" width="44" height="61" fill="#f6f8f7"/><rect x="6.7" y="8.6" width="40" height="56.5" fill="none" stroke="#cddbd4" stroke-width="0.8"/><rect x="8.5" y="11.5" width="36.5" height="51" fill="#fff" stroke="#cdd0d4" stroke-width="0.9"/><rect x="6" y="9.3" width="41" height="1.6" fill="#ebeded"/><path d="M3.5 6.5H49.5M3.5 67.5H49.5M4.5 5V69M48.5 5V69" stroke="#b9bbcf" stroke-width="1.3"/><circle cx="26" cy="6.3" r="1.2" fill="#a4a4b0"/><circle cx="26" cy="67.7" r="1.2" fill="#a4a4b0"/><circle cx="4.3" cy="36.5" r="1.2" fill="#a4a4b0"/><circle cx="48.7" cy="36.5" r="1.2" fill="#a4a4b0"/><path d="M29.2 25.7 Q27.4 22.9 27.4 22.1 Q27.5 19.6 25.4 18.6 Q25.2 17.5 23.7 15.0 Q23.5 12.5 24.5 12.0" stroke="#6a78d0" stroke-width="0.45" fill="none" opacity="0.75"/><path d="M31.7 31.7 Q32.1 32.4 33.8 35.1 Q33.3 36.5 32.3 38.8 Q33.4 40.8 31.8 42.8" stroke="#6a78d0" stroke-width="0.45" fill="none" opacity="0.75"/><path d="M31.2 52.7 Q29.2 53.6 27.2 52.7 Q27.0 50.0 24.5 49.7" stroke="#6a78d0" stroke-width="0.45" fill="none" opacity="0.75"/><path d="M32.1 26.5 Q32.8 27.4 35.7 28.3 Q37.9 28.4 39.5 27.1 Q40.2 27.6 43.5 27.4 Q44.8 27.2 45.0 29.6" stroke="#6a78d0" stroke-width="0.45" fill="none" opacity="0.75"/><path d="M32.8 23.7 Q35.1 23.4 36.6 24.6 Q37.4 23.5 39.0 21.4" stroke="#6a78d0" stroke-width="0.45" fill="none" opacity="0.75"/><path d="M30.6 33.9 Q29.8 34.8 31.3 37.8 Q32.3 40.0 33.0 41.4 Q34.0 42.3 36.9 42.1" stroke="#6a78d0" stroke-width="0.45" fill="none" opacity="0.75"/><path d="M33.7 32.8 Q34.1 34.4 34.1 36.7 Q35.6 40.0 35.2 40.6" stroke="#6a78d0" stroke-width="0.45" fill="none" opacity="0.75"/><path d="M33.1 29.5 Q34.5 27.4 36.3 27.1 Q35.2 25.3 36.3 23.1" stroke="#6a78d0" stroke-width="0.45" fill="none" opacity="0.75"/><path d="M33.1 51.4 Q34.7 54.1 35.5 54.6 Q37.8 54.2 39.5 54.4" stroke="#6a78d0" stroke-width="0.45" fill="none" opacity="0.75"/><path d="M35.1 27.5 Q35.0 28.9 37.2 30.9 Q38.0 33.7 37.1 34.9 Q38.9 35.5 38.9 38.5 Q37.3 40.5 36.8 41.9" stroke="#6a78d0" stroke-width="0.45" fill="none" opacity="0.75"/><path d="M36.9 25.3 Q37.0 24.3 39.0 21.9 Q38.5 20.8 38.5 17.9 Q38.9 15.6 40.9 14.7 Q41.8 12.6 42.6 12.0" stroke="#6a78d0" stroke-width="0.45" fill="none" opacity="0.75"/><path d="M29.7 31.4 Q28.0 31.5 25.9 30.2 Q25.4 30.6 23.1 33.0" stroke="#6a78d0" stroke-width="0.45" fill="none" opacity="0.75"/><path d="M36.4 42.9 Q35.1 40.4 34.8 39.2 Q33.2 37.7 32.3 36.1 Q29.0 37.2 28.3 35.7" stroke="#6a78d0" stroke-width="0.45" fill="none" opacity="0.75"/><path d="M34.5 39.0 Q35.3 36.7 34.4 35.0 Q32.3 33.6 31.0 33.0 Q30.3 31.5 29.7 29.2" stroke="#6a78d0" stroke-width="0.45" fill="none" opacity="0.75"/><path d="M10.3 18.5 Q11.6 18.0 12.8 19.0 Q13.8 19.9 15.2 19.4 Q16.8 19.5 17.2 17.8" stroke="#6a78d0" stroke-width="0.45" fill="none" opacity="0.8"/><path d="M15.9 37.0 Q17.3 38.3 17.8 38.6 Q18.6 39.3 18.8 40.9 Q18.5 41.7 17.8 43.2" stroke="#6a78d0" stroke-width="0.45" fill="none" opacity="0.8"/><path d="M12.6 31.6 Q12.7 31.0 12.9 29.1 Q11.8 28.0 11.5 27.0 Q9.7 25.8 9.4 25.7" stroke="#6a78d0" stroke-width="0.45" fill="none" opacity="0.8"/><path d="M11.3 40.3 Q10.6 39.2 9.0 39.5 Q9.0 38.7 9.0 38.5 Q9.0 37.4 9.0 36.1" stroke="#6a78d0" stroke-width="0.45" fill="none" opacity="0.8"/><path d="M17.1 17.8 Q18.3 18.5 18.8 19.6 Q19.7 19.7 21.0 20.9 Q21.5 20.5 23.4 21.1 Q25.4 21.3 25.8 22.1" stroke="#6a78d0" stroke-width="0.45" fill="none" opacity="0.8"/><path d="M14.1 23.4 Q15.6 24.7 15.8 25.2 Q15.6 26.1 16.3 27.7 Q15.9 28.7 15.9 30.1 Q16.9 31.1 17.9 31.6" stroke="#6a78d0" stroke-width="0.45" fill="none" opacity="0.8"/><path d="M10.4 16.5 Q9.0 16.6 9.0 17.7 Q9.0 17.6 9.0 18.5 Q9.0 17.9 9.0 18.6" stroke="#6a78d0" stroke-width="0.45" fill="none" opacity="0.8"/><path d="M17.5 21.6 Q18.1 21.7 20.0 21.3 Q21.5 21.3 22.0 19.8" stroke="#6a78d0" stroke-width="0.45" fill="none" opacity="0.8"/><path d="M32.4 18.2 Q33.5 18.5 34.8 17.4 Q35.6 18.4 37.2 18.0 Q38.1 16.9 38.9 16.1 Q38.2 15.3 39.1 13.6" stroke="#7080d8" stroke-width="0.5" fill="none" opacity="0.85"/><path d="M32.1 15.5 Q33.2 15.1 34.2 14.1 Q35.3 14.0 36.6 13.6" stroke="#7080d8" stroke-width="0.5" fill="none" opacity="0.85"/><path d="M36.1 10.6 Q36.3 12.0 35.8 12.0 Q37.1 12.0 37.5 12.0 Q38.6 12.0 39.9 12.0 Q39.9 12.0 40.8 12.0" stroke="#7080d8" stroke-width="0.5" fill="none" opacity="0.85"/><path d="M34.7 17.5 Q34.5 16.4 35.1 15.0 Q35.6 13.8 35.1 12.5 Q34.7 12.2 33.8 12.0" stroke="#7080d8" stroke-width="0.5" fill="none" opacity="0.85"/><path d="M33.7 18.8 Q34.9 19.4 34.9 21.0 Q36.8 20.8 37.4 21.6 Q38.8 21.4 39.9 21.6" stroke="#7080d8" stroke-width="0.5" fill="none" opacity="0.85"/><path d="M38.8 19.2 Q40.6 19.3 41.3 18.7 Q42.1 19.9 43.2 20.3 Q43.7 20.7 44.9 22.2 Q44.7 24.0 45.0 24.4" stroke="#7080d8" stroke-width="0.5" fill="none" opacity="0.85"/><path d="M13 44 V60" stroke="#9098c8" stroke-width="0.55" stroke-dasharray="1.6 0.8" opacity="0.6"/><path d="M15 44 V60" stroke="#9098c8" stroke-width="0.55" stroke-dasharray="1.6 0.8" opacity="0.6"/><path d="M21 44 V60" stroke="#9098c8" stroke-width="0.55" stroke-dasharray="1.6 0.8" opacity="0.6"/><path d="M23 44 V60" stroke="#9098c8" stroke-width="0.55" stroke-dasharray="1.6 0.8" opacity="0.6"/><path d="M31 44 V60" stroke="#9098c8" stroke-width="0.55" stroke-dasharray="1.6 0.8" opacity="0.6"/><path d="M33 44 V60" stroke="#9098c8" stroke-width="0.55" stroke-dasharray="1.6 0.8" opacity="0.6"/><path d="M14.9 13.3 Q16.1 12.5 19.7 14.8 Q22.1 13.5 23.2 12.0" stroke="#a8b0e4" stroke-width="0.35" fill="none" opacity="0.6"/><path d="M33.7 48.8 Q34.0 52.5 36.2 53.2 Q37.9 56.7 38.4 57.7 Q38.7 59.7 37.6 62.6 Q37.6 63.0 39.7 63.0" stroke="#a8b0e4" stroke-width="0.35" fill="none" opacity="0.6"/><path d="M42.3 57.6 Q44.5 55.1 45.0 54.1 Q43.3 52.5 44.2 49.1" stroke="#a8b0e4" stroke-width="0.35" fill="none" opacity="0.6"/><path d="M17.0 28.0 Q16.7 28.3 13.6 31.7 Q12.5 33.1 9.0 32.7" stroke="#a8b0e4" stroke-width="0.35" fill="none" opacity="0.6"/><path d="M30.5 35.8 Q32.1 37.2 34.4 39.0 Q34.4 42.1 35.5 43.8 Q34.9 47.5 36.2 48.8 Q39.5 48.7 40.7 50.9" stroke="#a8b0e4" stroke-width="0.35" fill="none" opacity="0.6"/><path d="M10.0 22.1 Q9.0 21.0 9.0 19.9 Q9.0 17.6 9.0 15.3" stroke="#a8b0e4" stroke-width="0.35" fill="none" opacity="0.6"/><path d="M21.8 53.6 Q21.9 56.5 24.0 58.1 Q23.8 60.8 26.2 62.6" stroke="#a8b0e4" stroke-width="0.35" fill="none" opacity="0.6"/><path d="M12.8 51.4 Q12.2 48.6 12.6 46.4 Q13.2 42.6 11.3 41.6" stroke="#a8b0e4" stroke-width="0.35" fill="none" opacity="0.6"/><path d="M22 12 V60 M9 40 H26" stroke="#b0b4d8" stroke-width="0.45" opacity="0.7"/><circle cx="37.5" cy="52" r="1.1" fill="#223"/><path d="M33 16 Q33 11 37 11 Q41 11 40.5 16 Q40 20 37 20.5 Q33.5 20 33 16Z M27 30 Q27 25.5 31 25.5 Q34.5 26 34 30 Q33.5 33.5 30.5 33.5 Q27.5 33 27 30Z M29 34 L25 45 L24 60 M32 34 L37 42 L39 60 M12 19 a2.5 2.5 0 1 0 5 0 a2.5 2.5 0 1 0 -5 0 M12 31 a2.5 2.5 0 1 0 5 0 a2.5 2.5 0 1 0 -5 0" stroke="#5a68c8" stroke-width="0.5" fill="none" opacity="0.85"/></svg>
<div class="t" style="left:545px;top:148.3px;width:52px;text-align:center;font-size:8px;color:#bcbcbc">3</div>
<svg style="left:603px;top:72.89999999999999px;overflow:hidden" width="52" height="73" viewBox="0 0 52 73"><rect x="0" y="0" width="52" height="73" fill="#fff"/><rect x="4.5" y="6.5" width="44" height="61" fill="#f6f8f7"/><rect x="6.7" y="8.6" width="40" height="56.5" fill="none" stroke="#cddbd4" stroke-width="0.8"/><rect x="8.5" y="11.5" width="36.5" height="51" fill="#fff" stroke="#cdd0d4" stroke-width="0.9"/><rect x="6" y="9.3" width="41" height="1.6" fill="#ebeded"/><path d="M3.5 6.5H49.5M3.5 67.5H49.5M4.5 5V69M48.5 5V69" stroke="#b9bbcf" stroke-width="1.3"/><circle cx="26" cy="6.3" r="1.2" fill="#a4a4b0"/><circle cx="26" cy="67.7" r="1.2" fill="#a4a4b0"/><circle cx="4.3" cy="36.5" r="1.2" fill="#a4a4b0"/><circle cx="48.7" cy="36.5" r="1.2" fill="#a4a4b0"/><path d="M41.0 10.8 Q41.7 12.0 42.3 13.5 Q41.6 15.5 40.3 15.8 Q40.8 17.6 40.9 18.7" stroke="#d88070" stroke-width="0.5" fill="none" opacity="0.8"/><path d="M38.4 11.1 Q37.7 12.0 35.6 12.0 Q33.5 12.0 32.7 12.0 Q32.0 12.0 30.9 12.0 Q30.6 12.0 28.9 12.0" stroke="#d88070" stroke-width="0.5" fill="none" opacity="0.8"/><path d="M34.7 19.6 Q32.7 18.5 32.0 18.4 Q30.6 17.6 29.0 18.3 Q27.0 19.8 26.2 19.4 Q24.0 20.0 23.3 18.9" stroke="#d88070" stroke-width="0.5" fill="none" opacity="0.8"/><path d="M33.9 22.3 Q35.1 22.4 36.6 23.6 Q36.9 24.1 38.7 25.8 Q39.1 26.3 41.3 27.2" stroke="#d88070" stroke-width="0.5" fill="none" opacity="0.8"/><path d="M40.1 32.2 Q37.8 32.4 37.5 33.6 Q35.0 32.9 34.5 33.3 Q34.0 32.3 32.7 30.9 Q33.0 29.8 31.8 28.0" stroke="#d88070" stroke-width="0.5" fill="none" opacity="0.8"/><path d="M38.9 38.1 Q39.5 36.9 39.4 35.1 Q39.1 33.9 39.5 32.1 Q38.2 31.8 37.2 30.3 Q36.8 28.4 36.0 27.5" stroke="#d88070" stroke-width="0.5" fill="none" opacity="0.8"/><path d="M36.8 24.6 Q36.1 24.2 34.7 22.4 Q34.7 19.9 35.3 19.4 Q37.3 17.8 37.8 17.8" stroke="#d88070" stroke-width="0.5" fill="none" opacity="0.8"/><path d="M35.3 17.0 Q34.2 15.6 34.8 14.0 Q35.1 12.5 34.6 12.0" stroke="#d88070" stroke-width="0.5" fill="none" opacity="0.8"/><path d="M38.8 36.5 Q37.5 36.5 36.5 34.6 Q35.0 35.5 33.5 34.7 Q32.4 34.2 30.9 33.2" stroke="#d88070" stroke-width="0.5" fill="none" opacity="0.8"/><path d="M35.3 22.2 Q36.6 22.9 38.2 22.8 Q39.2 22.0 41.2 22.3" stroke="#d88070" stroke-width="0.5" fill="none" opacity="0.8"/><path d="M39.7 40.1 Q40.3 38.5 39.0 37.1 Q38.6 35.5 36.5 35.6" stroke="#d88070" stroke-width="0.5" fill="none" opacity="0.8"/><path d="M40.2 16.2 Q39.7 15.5 37.3 15.5 Q36.6 15.3 34.7 13.9 Q33.0 13.3 32.1 12.4 Q31.4 12.8 29.3 13.6" stroke="#d88070" stroke-width="0.5" fill="none" opacity="0.8"/><path d="M40.7 18.6 Q39.6 18.0 37.9 17.4 Q37.8 15.8 36.5 14.8 Q36.1 13.2 36.3 12.0" stroke="#d88070" stroke-width="0.5" fill="none" opacity="0.8"/><path d="M38.6 12.7 Q40.7 12.4 41.4 13.9 Q42.8 15.8 42.6 16.6" stroke="#d88070" stroke-width="0.5" fill="none" opacity="0.8"/><path d="M15.9 55.8 Q14.5 52.7 14.5 52.0 Q13.3 50.9 11.5 49.4" stroke="#e0a090" stroke-width="0.4" fill="none" opacity="0.65"/><path d="M35.9 31.9 Q34.6 33.6 33.8 35.2 Q32.8 37.9 30.8 37.9" stroke="#e0a090" stroke-width="0.4" fill="none" opacity="0.65"/><path d="M14.5 58.4 Q12.8 57.1 12.8 54.8 Q12.7 52.7 11.3 51.0 Q12.5 48.7 13.4 47.6 Q12.2 45.6 13.0 43.6" stroke="#e0a090" stroke-width="0.4" fill="none" opacity="0.65"/><path d="M13.6 42.3 Q14.7 43.1 17.5 43.5 Q17.9 44.5 20.1 46.5 Q20.5 47.9 21.0 50.4" stroke="#e0a090" stroke-width="0.4" fill="none" opacity="0.65"/><path d="M25.0 40.8 Q26.5 39.4 27.1 37.3 Q26.3 36.2 24.9 34.0 Q25.4 33.5 26.7 30.4 Q27.6 29.7 28.6 26.9" stroke="#e0a090" stroke-width="0.4" fill="none" opacity="0.65"/><path d="M12.9 51.6 Q11.4 51.5 9.0 52.3 Q9.0 52.5 9.0 50.5 Q9.0 49.9 9.0 50.6" stroke="#e0a090" stroke-width="0.4" fill="none" opacity="0.65"/><path d="M13.5 35.7 Q12.7 36.9 11.8 39.3 Q12.2 41.6 10.1 42.9 Q9.0 43.3 9.0 44.6" stroke="#e0a090" stroke-width="0.4" fill="none" opacity="0.65"/><path d="M20.4 46.7 Q18.9 45.3 17.1 44.4 Q15.4 42.0 14.2 41.6" stroke="#e0a090" stroke-width="0.4" fill="none" opacity="0.65"/><path d="M13.3 55.4 Q12.6 57.4 11.9 59.2 Q10.8 61.6 11.7 63.0 Q11.7 63.0 9.7 63.0 Q11.2 63.0 11.9 63.0" stroke="#e0a090" stroke-width="0.4" fill="none" opacity="0.65"/><path d="M16.9 49.6 Q19.9 49.6 20.8 48.9 Q23.5 48.7 24.4 47.1 Q25.6 45.9 28.2 45.8" stroke="#e0a090" stroke-width="0.4" fill="none" opacity="0.65"/><path d="M23.8 36.8 Q23.0 37.3 19.9 37.8 Q18.8 38.9 16.0 38.5 Q14.7 39.0 12.3 40.0 Q12.5 42.3 11.7 44.0" stroke="#e0a090" stroke-width="0.4" fill="none" opacity="0.65"/><path d="M39.8 49.4 Q39.6 51.1 41.6 52.9 Q41.1 54.5 39.8 56.5 Q41.6 59.3 42.4 59.6" stroke="#e0a090" stroke-width="0.4" fill="none" opacity="0.65"/><path d="M16 36 V58" stroke="#d89080" stroke-width="0.55" stroke-dasharray="1.6 0.8" opacity="0.55"/><path d="M18 36 V58" stroke="#d89080" stroke-width="0.55" stroke-dasharray="1.6 0.8" opacity="0.55"/><path d="M31 36 V58" stroke="#d89080" stroke-width="0.55" stroke-dasharray="1.6 0.8" opacity="0.55"/><path d="M33 36 V58" stroke="#d89080" stroke-width="0.55" stroke-dasharray="1.6 0.8" opacity="0.55"/><path d="M37 36 V58" stroke="#d89080" stroke-width="0.55" stroke-dasharray="1.6 0.8" opacity="0.55"/><path d="M39 36 V58" stroke="#d89080" stroke-width="0.55" stroke-dasharray="1.6 0.8" opacity="0.55"/><path d="M35 13 Q35 10 37.5 10 Q40 10 39.8 13 Q39.5 16 37.5 16 Q35.2 16 35 13Z M36 16 L34.5 30 L35 45 M39 16 L40.5 30 L40 45 M17 25 Q19 22 21 25 L20 35" stroke="#d07060" stroke-width="0.5" fill="none" opacity="0.85"/><path d="M27 12 V62 M9 34 H27" stroke="#e0b0a8" stroke-width="0.45" opacity="0.7"/></svg>
<div class="t" style="left:603px;top:148.3px;width:52px;text-align:center;font-size:8px;color:#bcbcbc">2</div>
<div style="position:absolute;left:667px;top:62.3px;width:120.5px;height:95px;background:#3c3c3c;box-shadow:1px 1px 0.5px #232323"></div>
<svg style="left:672px;top:72.89999999999999px;overflow:hidden" width="52" height="73" viewBox="0 0 52 73"><rect x="0" y="0" width="52" height="73" fill="#fff"/><rect x="4.5" y="6.5" width="44" height="61" fill="#f6f8f7"/><rect x="6.7" y="8.6" width="40" height="56.5" fill="none" stroke="#cddbd4" stroke-width="0.8"/><rect x="8.5" y="11.5" width="36.5" height="51" fill="#fff" stroke="#cdd0d4" stroke-width="0.9"/><rect x="6" y="9.3" width="41" height="1.6" fill="#ebeded"/><path d="M3.5 6.5H49.5M3.5 67.5H49.5M4.5 5V69M48.5 5V69" stroke="#b9bbcf" stroke-width="1.3"/><circle cx="26" cy="6.3" r="1.2" fill="#a4a4b0"/><circle cx="26" cy="67.7" r="1.2" fill="#a4a4b0"/><circle cx="4.3" cy="36.5" r="1.2" fill="#a4a4b0"/><circle cx="48.7" cy="36.5" r="1.2" fill="#a4a4b0"/><path d="M39.2 22.9 Q42.2 21.1 43.8 21.0 Q45.0 19.9 45.0 21.8 Q45.0 24.8 45.0 25.5" stroke="#c8b8b8" stroke-width="0.35" fill="none" opacity="0.55"/><path d="M34.8 16.2 Q33.6 15.7 31.3 12.6 Q30.4 12.0 32.5 12.0 Q31.9 12.0 28.8 12.0 Q27.1 12.0 26.2 12.0" stroke="#c8b8b8" stroke-width="0.35" fill="none" opacity="0.55"/><path d="M30.4 59.9 Q28.7 58.0 27.9 55.6 Q26.9 52.4 24.8 51.6 Q24.5 49.6 25.0 46.6 Q25.6 43.9 26.8 42.0" stroke="#c8b8b8" stroke-width="0.35" fill="none" opacity="0.55"/><path d="M36.7 59.2 Q35.5 57.2 35.8 54.3 Q37.3 52.2 36.7 49.4 Q39.7 46.6 41.1 47.0 Q42.8 44.8 42.3 42.1" stroke="#c8b8b8" stroke-width="0.35" fill="none" opacity="0.55"/><path d="M43.2 24.3 Q42.3 26.4 38.7 26.5 Q35.7 27.8 36.0 30.7 Q35.3 34.1 34.0 35.3" stroke="#c8b8b8" stroke-width="0.35" fill="none" opacity="0.55"/><path d="M40.2 14.1 Q41.0 12.7 38.6 12.0 Q39.0 12.0 37.5 12.0 Q37.4 12.0 36.9 12.0 Q36.9 12.0 34.9 12.0" stroke="#c8b8b8" stroke-width="0.35" fill="none" opacity="0.55"/><path d="M43.4 27.5 Q44.8 27.3 45.0 28.8 Q45.0 30.6 45.0 32.7 Q45.0 33.3 45.0 32.2" stroke="#c8b8b8" stroke-width="0.35" fill="none" opacity="0.55"/><path d="M17.9 41.0 Q19.1 37.8 20.3 36.6 Q18.4 35.1 19.3 31.7 Q18.0 29.3 16.1 27.8 Q17.2 24.5 15.9 22.9" stroke="#c8b8b8" stroke-width="0.35" fill="none" opacity="0.55"/><path d="M41.4 36.7 Q44.5 34.3 45.0 34.2 Q45.0 33.5 45.0 32.8 Q43.8 31.9 45.0 27.8" stroke="#c8b8b8" stroke-width="0.35" fill="none" opacity="0.55"/><path d="M39.4 36.3 Q38.4 32.5 38.8 31.4 Q38.5 29.3 37.5 26.5 Q36.4 24.9 33.0 24.4" stroke="#c8b8b8" stroke-width="0.35" fill="none" opacity="0.55"/><path d="M43.8 30.9 Q45.0 31.5 45.0 32.4 Q45.0 33.4 45.0 37.4" stroke="#c8b8b8" stroke-width="0.35" fill="none" opacity="0.55"/><path d="M30.3 31.9 Q33.0 32.8 35.3 32.7 Q36.6 34.7 36.8 37.5" stroke="#c8b8b8" stroke-width="0.35" fill="none" opacity="0.55"/><path d="M16.5 23.9 Q16.5 22.5 18.1 22.0 Q19.1 21.5 18.9 19.6 Q19.3 19.6 21.2 18.6 Q22.7 19.5 23.7 18.8" stroke="#b09090" stroke-width="0.4" fill="none" opacity="0.7"/><path d="M12.6 23.7 Q12.8 22.8 13.7 21.5 Q14.1 20.6 15.9 20.3" stroke="#b09090" stroke-width="0.4" fill="none" opacity="0.7"/><path d="M14.6 23.5 Q13.9 24.5 12.2 24.1 Q11.1 24.0 10.2 22.6" stroke="#b09090" stroke-width="0.4" fill="none" opacity="0.7"/><path d="M20.0 23.9 Q21.8 24.5 22.5 23.9 Q23.2 22.2 24.1 21.9" stroke="#b09090" stroke-width="0.4" fill="none" opacity="0.7"/><path d="M21.3 32.1 Q21.4 30.5 22.2 29.8 Q21.3 28.4 20.9 27.6 Q20.4 26.3 20.9 25.1" stroke="#b09090" stroke-width="0.4" fill="none" opacity="0.7"/><path d="M20.9 27.3 Q21.3 27.7 22.8 28.9 Q22.5 29.6 22.8 31.4 Q22.6 33.3 23.0 33.9" stroke="#b09090" stroke-width="0.4" fill="none" opacity="0.7"/><path d="M13.1 33.7 Q13.5 35.5 13.6 36.2 Q15.2 37.5 15.9 37.3 Q16.7 37.3 18.2 38.1 Q19.2 37.5 20.6 37.3" stroke="#b09090" stroke-width="0.4" fill="none" opacity="0.7"/><path d="M13.6 32.0 Q13.5 33.6 14.9 34.1 Q15.4 34.0 17.0 35.6" stroke="#b09090" stroke-width="0.4" fill="none" opacity="0.7"/><path d="M38.0 51.5 Q39.3 51.1 41.0 51.7 Q42.8 50.7 43.3 49.7 Q43.0 48.5 43.9 46.8" stroke="#b8b0b0" stroke-width="0.4" fill="none" opacity="0.6"/><path d="M37.9 58.0 Q36.0 57.4 35.6 56.1 Q34.1 54.5 33.9 53.7 Q32.8 54.0 31.0 54.2" stroke="#b8b0b0" stroke-width="0.4" fill="none" opacity="0.6"/><path d="M38.1 58.5 Q37.3 59.6 35.2 59.3 Q32.8 60.6 32.3 60.2 Q31.7 60.2 29.5 61.2" stroke="#b8b0b0" stroke-width="0.4" fill="none" opacity="0.6"/><path d="M30.2 57.0 Q29.0 58.2 27.4 58.0 Q27.1 59.9 25.1 59.9" stroke="#b8b0b0" stroke-width="0.4" fill="none" opacity="0.6"/><path d="M28.9 48.4 Q28.7 49.8 27.1 50.8 Q25.2 50.0 24.1 50.8 Q22.7 49.0 21.6 49.1" stroke="#b8b0b0" stroke-width="0.4" fill="none" opacity="0.6"/><path d="M26 12 V62 M9 38 H45" stroke="#d0c8c8" stroke-width="0.45" opacity="0.7"/><circle cx="28" cy="13.5" r="0.8" fill="#90c090"/><path d="M13 28 Q13 23.5 17 23.5 Q21 23.5 20.5 28 Q20 32 17 32 Q13.5 32 13 28Z M12 26 Q17 20 23 26 M15 32 L13 45 M19 32 L22 45" stroke="#a89090" stroke-width="0.5" fill="none" opacity="0.85"/><ellipse cx="33" cy="53" rx="4.2" ry="3.2" fill="#fff" stroke="#aaa" stroke-width="0.5"/><circle cx="31.5" cy="53" r="0.9" fill="#222"/><circle cx="34.5" cy="53" r="0.9" fill="#222"/></svg>
<div class="t" style="left:672px;top:148.3px;width:52px;text-align:center;font-size:8px;color:#bcbcbc">1</div>
<div style="position:absolute;left:286px;top:164.6px;width:120.5px;height:95px;background:#3c3c3c;box-shadow:1px 1px 0.5px #232323"></div>
<svg style="left:291px;top:175.2px;overflow:hidden" width="52" height="73" viewBox="0 0 52 73"><rect x="0" y="0" width="52" height="73" fill="#fff"/><rect x="4.5" y="6.5" width="44" height="61" fill="#f6f8f7"/><rect x="6.7" y="8.6" width="40" height="56.5" fill="none" stroke="#cddbd4" stroke-width="0.8"/><rect x="8.5" y="11.5" width="36.5" height="51" fill="#fff" stroke="#cdd0d4" stroke-width="0.9"/><rect x="6" y="9.3" width="41" height="1.6" fill="#ebeded"/><path d="M3.5 6.5H49.5M3.5 67.5H49.5M4.5 5V69M48.5 5V69" stroke="#b9bbcf" stroke-width="1.3"/><circle cx="26" cy="6.3" r="1.2" fill="#a4a4b0"/><circle cx="26" cy="67.7" r="1.2" fill="#a4a4b0"/><circle cx="4.3" cy="36.5" r="1.2" fill="#a4a4b0"/><circle cx="48.7" cy="36.5" r="1.2" fill="#a4a4b0"/></svg>
<div class="t" style="left:291px;top:250.6px;width:52px;text-align:center;font-size:8px;color:#bcbcbc">15</div>
<svg style="left:349px;top:175.2px;overflow:hidden" width="52" height="73" viewBox="0 0 52 73"><rect x="0" y="0" width="52" height="73" fill="#fff"/><rect x="4.5" y="6.5" width="44" height="61" fill="#f6f8f7"/><rect x="6.7" y="8.6" width="40" height="56.5" fill="none" stroke="#cddbd4" stroke-width="0.8"/><rect x="8.5" y="11.5" width="36.5" height="51" fill="#fff" stroke="#cdd0d4" stroke-width="0.9"/><rect x="6" y="9.3" width="41" height="1.6" fill="#ebeded"/><path d="M3.5 6.5H49.5M3.5 67.5H49.5M4.5 5V69M48.5 5V69" stroke="#b9bbcf" stroke-width="1.3"/><circle cx="26" cy="6.3" r="1.2" fill="#a4a4b0"/><circle cx="26" cy="67.7" r="1.2" fill="#a4a4b0"/><circle cx="4.3" cy="36.5" r="1.2" fill="#a4a4b0"/><circle cx="48.7" cy="36.5" r="1.2" fill="#a4a4b0"/></svg>
<div class="t" style="left:349px;top:250.6px;width:52px;text-align:center;font-size:8px;color:#bcbcbc">14</div>
<div style="position:absolute;left:413px;top:164.6px;width:120.5px;height:95px;background:#3c3c3c;box-shadow:1px 1px 0.5px #232323"></div>
<svg style="left:418px;top:175.2px;overflow:hidden" width="52" height="73" viewBox="0 0 52 73"><rect x="0" y="0" width="52" height="73" fill="#fff"/><rect x="4.5" y="6.5" width="44" height="61" fill="#f6f8f7"/><rect x="6.7" y="8.6" width="40" height="56.5" fill="none" stroke="#cddbd4" stroke-width="0.8"/><rect x="8.5" y="11.5" width="36.5" height="51" fill="#fff" stroke="#cdd0d4" stroke-width="0.9"/><rect x="6" y="9.3" width="41" height="1.6" fill="#ebeded"/><path d="M3.5 6.5H49.5M3.5 67.5H49.5M4.5 5V69M48.5 5V69" stroke="#b9bbcf" stroke-width="1.3"/><circle cx="26" cy="6.3" r="1.2" fill="#a4a4b0"/><circle cx="26" cy="67.7" r="1.2" fill="#a4a4b0"/><circle cx="4.3" cy="36.5" r="1.2" fill="#a4a4b0"/><circle cx="48.7" cy="36.5" r="1.2" fill="#a4a4b0"/></svg>
<div class="t" style="left:418px;top:250.6px;width:52px;text-align:center;font-size:8px;color:#bcbcbc">13</div>
<svg style="left:476px;top:175.2px;overflow:hidden" width="52" height="73" viewBox="0 0 52 73"><rect x="0" y="0" width="52" height="73" fill="#fff"/><rect x="4.5" y="6.5" width="44" height="61" fill="#f6f8f7"/><rect x="6.7" y="8.6" width="40" height="56.5" fill="none" stroke="#cddbd4" stroke-width="0.8"/><rect x="8.5" y="11.5" width="36.5" height="51" fill="#fff" stroke="#cdd0d4" stroke-width="0.9"/><rect x="6" y="9.3" width="41" height="1.6" fill="#ebeded"/><path d="M3.5 6.5H49.5M3.5 67.5H49.5M4.5 5V69M48.5 5V69" stroke="#b9bbcf" stroke-width="1.3"/><circle cx="26" cy="6.3" r="1.2" fill="#a4a4b0"/><circle cx="26" cy="67.7" r="1.2" fill="#a4a4b0"/><circle cx="4.3" cy="36.5" r="1.2" fill="#a4a4b0"/><circle cx="48.7" cy="36.5" r="1.2" fill="#a4a4b0"/></svg>
<div class="t" style="left:476px;top:250.6px;width:52px;text-align:center;font-size:8px;color:#bcbcbc">12</div>
<div style="position:absolute;left:540px;top:164.6px;width:120.5px;height:95px;background:#3c3c3c;box-shadow:1px 1px 0.5px #232323"></div>
<svg style="left:545px;top:175.2px;overflow:hidden" width="52" height="73" viewBox="0 0 52 73"><rect x="0" y="0" width="52" height="73" fill="#fff"/><rect x="4.5" y="6.5" width="44" height="61" fill="#f6f8f7"/><rect x="6.7" y="8.6" width="40" height="56.5" fill="none" stroke="#cddbd4" stroke-width="0.8"/><rect x="8.5" y="11.5" width="36.5" height="51" fill="#fff" stroke="#cdd0d4" stroke-width="0.9"/><rect x="6" y="9.3" width="41" height="1.6" fill="#ebeded"/><path d="M3.5 6.5H49.5M3.5 67.5H49.5M4.5 5V69M48.5 5V69" stroke="#b9bbcf" stroke-width="1.3"/><circle cx="26" cy="6.3" r="1.2" fill="#a4a4b0"/><circle cx="26" cy="67.7" r="1.2" fill="#a4a4b0"/><circle cx="4.3" cy="36.5" r="1.2" fill="#a4a4b0"/><circle cx="48.7" cy="36.5" r="1.2" fill="#a4a4b0"/></svg>
<div class="t" style="left:545px;top:250.6px;width:52px;text-align:center;font-size:8px;color:#bcbcbc">11</div>
<svg style="left:603px;top:175.2px;overflow:hidden" width="52" height="73" viewBox="0 0 52 73"><rect x="0" y="0" width="52" height="73" fill="#fff"/><rect x="4.5" y="6.5" width="44" height="61" fill="#f6f8f7"/><rect x="6.7" y="8.6" width="40" height="56.5" fill="none" stroke="#cddbd4" stroke-width="0.8"/><rect x="8.5" y="11.5" width="36.5" height="51" fill="#fff" stroke="#cdd0d4" stroke-width="0.9"/><rect x="6" y="9.3" width="41" height="1.6" fill="#ebeded"/><path d="M3.5 6.5H49.5M3.5 67.5H49.5M4.5 5V69M48.5 5V69" stroke="#b9bbcf" stroke-width="1.3"/><circle cx="26" cy="6.3" r="1.2" fill="#a4a4b0"/><circle cx="26" cy="67.7" r="1.2" fill="#a4a4b0"/><circle cx="4.3" cy="36.5" r="1.2" fill="#a4a4b0"/><circle cx="48.7" cy="36.5" r="1.2" fill="#a4a4b0"/></svg>
<div class="t" style="left:603px;top:250.6px;width:52px;text-align:center;font-size:8px;color:#bcbcbc">10</div>
<div style="position:absolute;left:667px;top:164.6px;width:120.5px;height:95px;background:#3c3c3c;box-shadow:1px 1px 0.5px #232323"></div>
<svg style="left:672px;top:175.2px;overflow:hidden" width="52" height="73" viewBox="0 0 52 73"><rect x="0" y="0" width="52" height="73" fill="#fff"/><rect x="4.5" y="6.5" width="44" height="61" fill="#f6f8f7"/><rect x="6.7" y="8.6" width="40" height="56.5" fill="none" stroke="#cddbd4" stroke-width="0.8"/><rect x="8.5" y="11.5" width="36.5" height="51" fill="#fff" stroke="#cdd0d4" stroke-width="0.9"/><rect x="6" y="9.3" width="41" height="1.6" fill="#ebeded"/><path d="M3.5 6.5H49.5M3.5 67.5H49.5M4.5 5V69M48.5 5V69" stroke="#b9bbcf" stroke-width="1.3"/><circle cx="26" cy="6.3" r="1.2" fill="#a4a4b0"/><circle cx="26" cy="67.7" r="1.2" fill="#a4a4b0"/><circle cx="4.3" cy="36.5" r="1.2" fill="#a4a4b0"/><circle cx="48.7" cy="36.5" r="1.2" fill="#a4a4b0"/></svg>
<div class="t" style="left:672px;top:250.6px;width:52px;text-align:center;font-size:8px;color:#bcbcbc">9</div>
<svg style="left:730px;top:175.2px;overflow:hidden" width="52" height="73" viewBox="0 0 52 73"><rect x="0" y="0" width="52" height="73" fill="#fff"/><rect x="4.5" y="6.5" width="44" height="61" fill="#f6f8f7"/><rect x="6.7" y="8.6" width="40" height="56.5" fill="none" stroke="#cddbd4" stroke-width="0.8"/><rect x="8.5" y="11.5" width="36.5" height="51" fill="#fff" stroke="#cdd0d4" stroke-width="0.9"/><rect x="6" y="9.3" width="41" height="1.6" fill="#ebeded"/><path d="M3.5 6.5H49.5M3.5 67.5H49.5M4.5 5V69M48.5 5V69" stroke="#b9bbcf" stroke-width="1.3"/><circle cx="26" cy="6.3" r="1.2" fill="#a4a4b0"/><circle cx="26" cy="67.7" r="1.2" fill="#a4a4b0"/><circle cx="4.3" cy="36.5" r="1.2" fill="#a4a4b0"/><circle cx="48.7" cy="36.5" r="1.2" fill="#a4a4b0"/></svg>
<div class="t" style="left:730px;top:250.6px;width:52px;text-align:center;font-size:8px;color:#bcbcbc">8</div>
<div style="position:absolute;left:286px;top:267px;width:120.5px;height:95px;background:#3c3c3c;box-shadow:1px 1px 0.5px #232323"></div>
<svg style="left:291px;top:277.6px;overflow:hidden" width="52" height="73" viewBox="0 0 52 73"><rect x="0" y="0" width="52" height="73" fill="#fff"/><rect x="4.5" y="6.5" width="44" height="61" fill="#f6f8f7"/><rect x="6.7" y="8.6" width="40" height="56.5" fill="none" stroke="#cddbd4" stroke-width="0.8"/><rect x="8.5" y="11.5" width="36.5" height="51" fill="#fff" stroke="#cdd0d4" stroke-width="0.9"/><rect x="6" y="9.3" width="41" height="1.6" fill="#ebeded"/><path d="M3.5 6.5H49.5M3.5 67.5H49.5M4.5 5V69M48.5 5V69" stroke="#b9bbcf" stroke-width="1.3"/><circle cx="26" cy="6.3" r="1.2" fill="#a4a4b0"/><circle cx="26" cy="67.7" r="1.2" fill="#a4a4b0"/><circle cx="4.3" cy="36.5" r="1.2" fill="#a4a4b0"/><circle cx="48.7" cy="36.5" r="1.2" fill="#a4a4b0"/></svg>
<div class="t" style="left:291px;top:353px;width:52px;text-align:center;font-size:8px;color:#bcbcbc">23</div>
<svg style="left:349px;top:277.6px;overflow:hidden" width="52" height="73" viewBox="0 0 52 73"><rect x="0" y="0" width="52" height="73" fill="#fff"/><rect x="4.5" y="6.5" width="44" height="61" fill="#f6f8f7"/><rect x="6.7" y="8.6" width="40" height="56.5" fill="none" stroke="#cddbd4" stroke-width="0.8"/><rect x="8.5" y="11.5" width="36.5" height="51" fill="#fff" stroke="#cdd0d4" stroke-width="0.9"/><rect x="6" y="9.3" width="41" height="1.6" fill="#ebeded"/><path d="M3.5 6.5H49.5M3.5 67.5H49.5M4.5 5V69M48.5 5V69" stroke="#b9bbcf" stroke-width="1.3"/><circle cx="26" cy="6.3" r="1.2" fill="#a4a4b0"/><circle cx="26" cy="67.7" r="1.2" fill="#a4a4b0"/><circle cx="4.3" cy="36.5" r="1.2" fill="#a4a4b0"/><circle cx="48.7" cy="36.5" r="1.2" fill="#a4a4b0"/></svg>
<div class="t" style="left:349px;top:353px;width:52px;text-align:center;font-size:8px;color:#bcbcbc">22</div>
<div style="position:absolute;left:413px;top:267px;width:120.5px;height:95px;background:#3c3c3c;box-shadow:1px 1px 0.5px #232323"></div>
<svg style="left:418px;top:277.6px;overflow:hidden" width="52" height="73" viewBox="0 0 52 73"><rect x="0" y="0" width="52" height="73" fill="#fff"/><rect x="4.5" y="6.5" width="44" height="61" fill="#f6f8f7"/><rect x="6.7" y="8.6" width="40" height="56.5" fill="none" stroke="#cddbd4" stroke-width="0.8"/><rect x="8.5" y="11.5" width="36.5" height="51" fill="#fff" stroke="#cdd0d4" stroke-width="0.9"/><rect x="6" y="9.3" width="41" height="1.6" fill="#ebeded"/><path d="M3.5 6.5H49.5M3.5 67.5H49.5M4.5 5V69M48.5 5V69" stroke="#b9bbcf" stroke-width="1.3"/><circle cx="26" cy="6.3" r="1.2" fill="#a4a4b0"/><circle cx="26" cy="67.7" r="1.2" fill="#a4a4b0"/><circle cx="4.3" cy="36.5" r="1.2" fill="#a4a4b0"/><circle cx="48.7" cy="36.5" r="1.2" fill="#a4a4b0"/></svg>
<div class="t" style="left:418px;top:353px;width:52px;text-align:center;font-size:8px;color:#bcbcbc">21</div>
<svg style="left:476px;top:277.6px;overflow:hidden" width="52" height="73" viewBox="0 0 52 73"><rect x="0" y="0" width="52" height="73" fill="#fff"/><rect x="4.5" y="6.5" width="44" height="61" fill="#f6f8f7"/><rect x="6.7" y="8.6" width="40" height="56.5" fill="none" stroke="#cddbd4" stroke-width="0.8"/><rect x="8.5" y="11.5" width="36.5" height="51" fill="#fff" stroke="#cdd0d4" stroke-width="0.9"/><rect x="6" y="9.3" width="41" height="1.6" fill="#ebeded"/><path d="M3.5 6.5H49.5M3.5 67.5H49.5M4.5 5V69M48.5 5V69" stroke="#b9bbcf" stroke-width="1.3"/><circle cx="26" cy="6.3" r="1.2" fill="#a4a4b0"/><circle cx="26" cy="67.7" r="1.2" fill="#a4a4b0"/><circle cx="4.3" cy="36.5" r="1.2" fill="#a4a4b0"/><circle cx="48.7" cy="36.5" r="1.2" fill="#a4a4b0"/></svg>
<div class="t" style="left:476px;top:353px;width:52px;text-align:center;font-size:8px;color:#bcbcbc">20</div>
<div style="position:absolute;left:540px;top:267px;width:120.5px;height:95px;background:#3c3c3c;box-shadow:1px 1px 0.5px #232323"></div>
<svg style="left:545px;top:277.6px;overflow:hidden" width="52" height="73" viewBox="0 0 52 73"><rect x="0" y="0" width="52" height="73" fill="#fff"/><rect x="4.5" y="6.5" width="44" height="61" fill="#f6f8f7"/><rect x="6.7" y="8.6" width="40" height="56.5" fill="none" stroke="#cddbd4" stroke-width="0.8"/><rect x="8.5" y="11.5" width="36.5" height="51" fill="#fff" stroke="#cdd0d4" stroke-width="0.9"/><rect x="6" y="9.3" width="41" height="1.6" fill="#ebeded"/><path d="M3.5 6.5H49.5M3.5 67.5H49.5M4.5 5V69M48.5 5V69" stroke="#b9bbcf" stroke-width="1.3"/><circle cx="26" cy="6.3" r="1.2" fill="#a4a4b0"/><circle cx="26" cy="67.7" r="1.2" fill="#a4a4b0"/><circle cx="4.3" cy="36.5" r="1.2" fill="#a4a4b0"/><circle cx="48.7" cy="36.5" r="1.2" fill="#a4a4b0"/></svg>
<div class="t" style="left:545px;top:353px;width:52px;text-align:center;font-size:8px;color:#bcbcbc">19</div>
<svg style="left:603px;top:277.6px;overflow:hidden" width="52" height="73" viewBox="0 0 52 73"><rect x="0" y="0" width="52" height="73" fill="#fff"/><rect x="4.5" y="6.5" width="44" height="61" fill="#f6f8f7"/><rect x="6.7" y="8.6" width="40" height="56.5" fill="none" stroke="#cddbd4" stroke-width="0.8"/><rect x="8.5" y="11.5" width="36.5" height="51" fill="#fff" stroke="#cdd0d4" stroke-width="0.9"/><rect x="6" y="9.3" width="41" height="1.6" fill="#ebeded"/><path d="M3.5 6.5H49.5M3.5 67.5H49.5M4.5 5V69M48.5 5V69" stroke="#b9bbcf" stroke-width="1.3"/><circle cx="26" cy="6.3" r="1.2" fill="#a4a4b0"/><circle cx="26" cy="67.7" r="1.2" fill="#a4a4b0"/><circle cx="4.3" cy="36.5" r="1.2" fill="#a4a4b0"/><circle cx="48.7" cy="36.5" r="1.2" fill="#a4a4b0"/></svg>
<div class="t" style="left:603px;top:353px;width:52px;text-align:center;font-size:8px;color:#bcbcbc">18</div>
<div style="position:absolute;left:667px;top:267px;width:120.5px;height:95px;background:#3c3c3c;box-shadow:1px 1px 0.5px #232323"></div>
<svg style="left:672px;top:277.6px;overflow:hidden" width="52" height="73" viewBox="0 0 52 73"><rect x="0" y="0" width="52" height="73" fill="#fff"/><rect x="4.5" y="6.5" width="44" height="61" fill="#f6f8f7"/><rect x="6.7" y="8.6" width="40" height="56.5" fill="none" stroke="#cddbd4" stroke-width="0.8"/><rect x="8.5" y="11.5" width="36.5" height="51" fill="#fff" stroke="#cdd0d4" stroke-width="0.9"/><rect x="6" y="9.3" width="41" height="1.6" fill="#ebeded"/><path d="M3.5 6.5H49.5M3.5 67.5H49.5M4.5 5V69M48.5 5V69" stroke="#b9bbcf" stroke-width="1.3"/><circle cx="26" cy="6.3" r="1.2" fill="#a4a4b0"/><circle cx="26" cy="67.7" r="1.2" fill="#a4a4b0"/><circle cx="4.3" cy="36.5" r="1.2" fill="#a4a4b0"/><circle cx="48.7" cy="36.5" r="1.2" fill="#a4a4b0"/></svg>
<div class="t" style="left:672px;top:353px;width:52px;text-align:center;font-size:8px;color:#bcbcbc">17</div>
<svg style="left:730px;top:277.6px;overflow:hidden" width="52" height="73" viewBox="0 0 52 73"><rect x="0" y="0" width="52" height="73" fill="#fff"/><rect x="4.5" y="6.5" width="44" height="61" fill="#f6f8f7"/><rect x="6.7" y="8.6" width="40" height="56.5" fill="none" stroke="#cddbd4" stroke-width="0.8"/><rect x="8.5" y="11.5" width="36.5" height="51" fill="#fff" stroke="#cdd0d4" stroke-width="0.9"/><rect x="6" y="9.3" width="41" height="1.6" fill="#ebeded"/><path d="M3.5 6.5H49.5M3.5 67.5H49.5M4.5 5V69M48.5 5V69" stroke="#b9bbcf" stroke-width="1.3"/><circle cx="26" cy="6.3" r="1.2" fill="#a4a4b0"/><circle cx="26" cy="67.7" r="1.2" fill="#a4a4b0"/><circle cx="4.3" cy="36.5" r="1.2" fill="#a4a4b0"/><circle cx="48.7" cy="36.5" r="1.2" fill="#a4a4b0"/></svg>
<div class="t" style="left:730px;top:353px;width:52px;text-align:center;font-size:8px;color:#bcbcbc">16</div>
<div style="position:absolute;left:413px;top:369.3px;width:120.5px;height:95px;background:#3c3c3c;box-shadow:1px 1px 0.5px #232323"></div>
<svg style="left:476px;top:379.90000000000003px;overflow:hidden" width="52" height="73" viewBox="0 0 52 73"><rect x="0" y="0" width="52" height="73" fill="#fff"/><rect x="4.5" y="6.5" width="44" height="61" fill="#f6f8f7"/><rect x="6.7" y="8.6" width="40" height="56.5" fill="none" stroke="#cddbd4" stroke-width="0.8"/><rect x="8.5" y="11.5" width="36.5" height="51" fill="#fff" stroke="#cdd0d4" stroke-width="0.9"/><rect x="6" y="9.3" width="41" height="1.6" fill="#ebeded"/><path d="M3.5 6.5H49.5M3.5 67.5H49.5M4.5 5V69M48.5 5V69" stroke="#b9bbcf" stroke-width="1.3"/><circle cx="26" cy="6.3" r="1.2" fill="#a4a4b0"/><circle cx="26" cy="67.7" r="1.2" fill="#a4a4b0"/><circle cx="4.3" cy="36.5" r="1.2" fill="#a4a4b0"/><circle cx="48.7" cy="36.5" r="1.2" fill="#a4a4b0"/></svg>
<div class="t" style="left:476px;top:455.3px;width:52px;text-align:center;font-size:8px;color:#bcbcbc">28</div>
<div style="position:absolute;left:540px;top:369.3px;width:120.5px;height:95px;background:#3c3c3c;box-shadow:1px 1px 0.5px #232323"></div>
<svg style="left:545px;top:379.90000000000003px;overflow:hidden" width="52" height="73" viewBox="0 0 52 73"><rect x="0" y="0" width="52" height="73" fill="#fff"/><rect x="4.5" y="6.5" width="44" height="61" fill="#f6f8f7"/><rect x="6.7" y="8.6" width="40" height="56.5" fill="none" stroke="#cddbd4" stroke-width="0.8"/><rect x="8.5" y="11.5" width="36.5" height="51" fill="#fff" stroke="#cdd0d4" stroke-width="0.9"/><rect x="6" y="9.3" width="41" height="1.6" fill="#ebeded"/><path d="M3.5 6.5H49.5M3.5 67.5H49.5M4.5 5V69M48.5 5V69" stroke="#b9bbcf" stroke-width="1.3"/><circle cx="26" cy="6.3" r="1.2" fill="#a4a4b0"/><circle cx="26" cy="67.7" r="1.2" fill="#a4a4b0"/><circle cx="4.3" cy="36.5" r="1.2" fill="#a4a4b0"/><circle cx="48.7" cy="36.5" r="1.2" fill="#a4a4b0"/></svg>
<div class="t" style="left:545px;top:455.3px;width:52px;text-align:center;font-size:8px;color:#bcbcbc">27</div>
<svg style="left:603px;top:379.90000000000003px;overflow:hidden" width="52" height="73" viewBox="0 0 52 73"><rect x="0" y="0" width="52" height="73" fill="#fff"/><rect x="4.5" y="6.5" width="44" height="61" fill="#f6f8f7"/><rect x="6.7" y="8.6" width="40" height="56.5" fill="none" stroke="#cddbd4" stroke-width="0.8"/><rect x="8.5" y="11.5" width="36.5" height="51" fill="#fff" stroke="#cdd0d4" stroke-width="0.9"/><rect x="6" y="9.3" width="41" height="1.6" fill="#ebeded"/><path d="M3.5 6.5H49.5M3.5 67.5H49.5M4.5 5V69M48.5 5V69" stroke="#b9bbcf" stroke-width="1.3"/><circle cx="26" cy="6.3" r="1.2" fill="#a4a4b0"/><circle cx="26" cy="67.7" r="1.2" fill="#a4a4b0"/><circle cx="4.3" cy="36.5" r="1.2" fill="#a4a4b0"/><circle cx="48.7" cy="36.5" r="1.2" fill="#a4a4b0"/></svg>
<div class="t" style="left:603px;top:455.3px;width:52px;text-align:center;font-size:8px;color:#bcbcbc">26</div>
<div style="position:absolute;left:667px;top:369.3px;width:120.5px;height:95px;background:#3c3c3c;box-shadow:1px 1px 0.5px #232323"></div>
<svg style="left:672px;top:379.90000000000003px;overflow:hidden" width="52" height="73" viewBox="0 0 52 73"><rect x="0" y="0" width="52" height="73" fill="#fff"/><rect x="4.5" y="6.5" width="44" height="61" fill="#f6f8f7"/><rect x="6.7" y="8.6" width="40" height="56.5" fill="none" stroke="#cddbd4" stroke-width="0.8"/><rect x="8.5" y="11.5" width="36.5" height="51" fill="#fff" stroke="#cdd0d4" stroke-width="0.9"/><rect x="6" y="9.3" width="41" height="1.6" fill="#ebeded"/><path d="M3.5 6.5H49.5M3.5 67.5H49.5M4.5 5V69M48.5 5V69" stroke="#b9bbcf" stroke-width="1.3"/><circle cx="26" cy="6.3" r="1.2" fill="#a4a4b0"/><circle cx="26" cy="67.7" r="1.2" fill="#a4a4b0"/><circle cx="4.3" cy="36.5" r="1.2" fill="#a4a4b0"/><circle cx="48.7" cy="36.5" r="1.2" fill="#a4a4b0"/></svg>
<div class="t" style="left:672px;top:455.3px;width:52px;text-align:center;font-size:8px;color:#bcbcbc">25</div>
<svg style="left:730px;top:379.90000000000003px;overflow:hidden" width="52" height="73" viewBox="0 0 52 73"><rect x="0" y="0" width="52" height="73" fill="#fff"/><rect x="4.5" y="6.5" width="44" height="61" fill="#f6f8f7"/><rect x="6.7" y="8.6" width="40" height="56.5" fill="none" stroke="#cddbd4" stroke-width="0.8"/><rect x="8.5" y="11.5" width="36.5" height="51" fill="#fff" stroke="#cdd0d4" stroke-width="0.9"/><rect x="6" y="9.3" width="41" height="1.6" fill="#ebeded"/><path d="M3.5 6.5H49.5M3.5 67.5H49.5M4.5 5V69M48.5 5V69" stroke="#b9bbcf" stroke-width="1.3"/><circle cx="26" cy="6.3" r="1.2" fill="#a4a4b0"/><circle cx="26" cy="67.7" r="1.2" fill="#a4a4b0"/><circle cx="4.3" cy="36.5" r="1.2" fill="#a4a4b0"/><circle cx="48.7" cy="36.5" r="1.2" fill="#a4a4b0"/></svg>
<div class="t" style="left:730px;top:455.3px;width:52px;text-align:center;font-size:8px;color:#bcbcbc">24</div>
</body></html>
